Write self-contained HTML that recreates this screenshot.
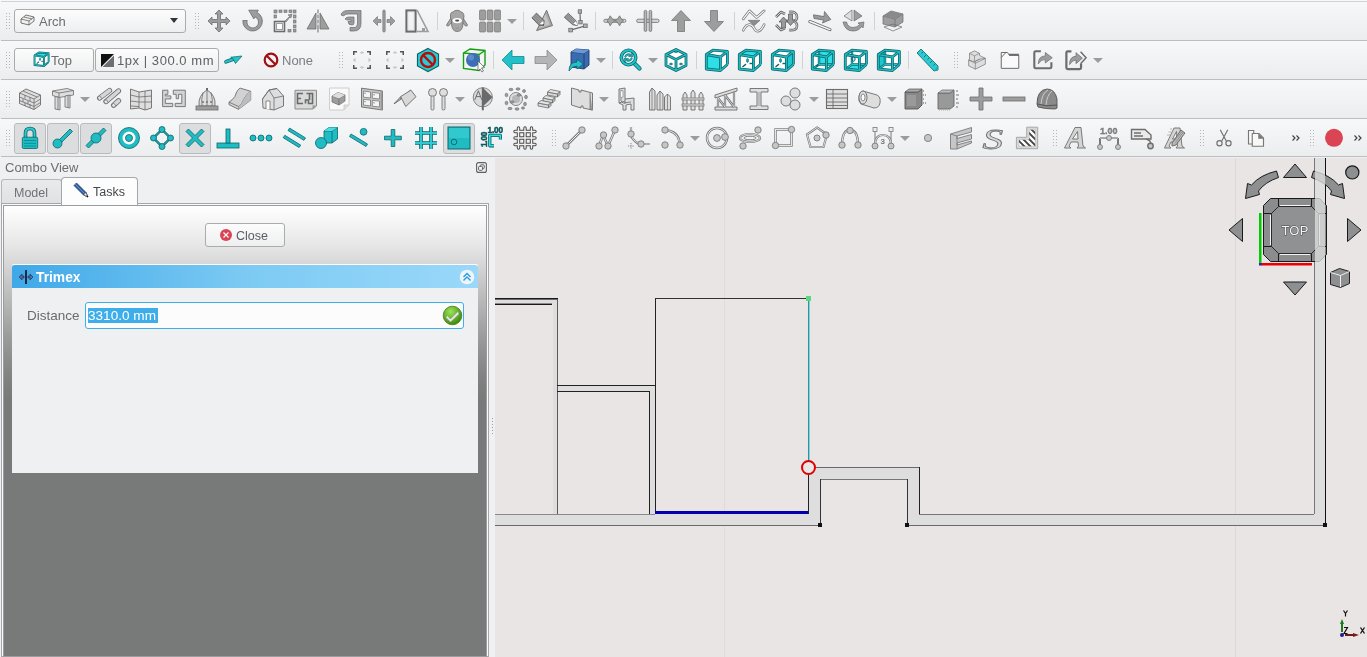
<!DOCTYPE html>
<html><head><meta charset="utf-8">
<style>
*{box-sizing:border-box}
html,body{margin:0;padding:0}
body{width:1367px;height:657px;overflow:hidden;position:relative;background:#eff0f1;font-family:"Liberation Sans",sans-serif;color:#31363b}
.a{position:absolute}
.row{position:absolute;left:0;width:1367px;background:linear-gradient(#f7f8f9,#ecedef)}
.hl{position:absolute;left:1px;width:1366px;height:1px;background:#bcbebf}
.handle{position:absolute;width:5px;height:17px;background-image:radial-gradient(circle,#b4b6b8 0.6px,transparent 0.9px);background-size:3px 3px}
.sep{position:absolute;width:1px;height:18px;background:#d0d2d3}
.ico{position:absolute;width:24px;height:24px;overflow:visible}
.dd{position:absolute;width:0;height:0;border-left:5px solid transparent;border-right:5px solid transparent;border-top:5px solid #9a9c9e}
.btn{position:absolute;border:1px solid #a9abac;border-radius:3px;background:linear-gradient(#fcfcfc,#eeeff0)}
.chk{position:absolute;width:32px;height:31px;border:1px solid #b9bbbc;border-radius:3px;background:#dcddde}
.t{position:absolute;white-space:nowrap;line-height:1;will-change:transform}
</style></head><body>
<!-- toolbar rows -->
<div class="row" style="top:0;height:40px"></div>
<div class="row" style="top:41px;height:38px"></div>
<div class="row" style="top:80px;height:38px"></div>
<div class="row" style="top:119px;height:37px"></div>
<div class="hl" style="top:1px;background:#d0d2d3"></div>
<div class="hl" style="top:40px"></div>
<div class="hl" style="top:79px"></div>
<div class="hl" style="top:118px"></div>
<div class="hl" style="top:156px"></div>

<div class="a" style="left:0;top:0;width:1367px;height:157px;will-change:transform"><div class="btn" style="left:14px;top:9px;width:172px;height:24px"></div>
<svg class="ico" style="left:20.0px;top:13px;width:24px;height:24px" viewBox="0 0 24 24"><path d="M1,6 L6,2 L14,4 L14,8 L9,12 L1,10 Z" fill="#f0f0f0" stroke="#555" stroke-width="0.8"/><path d="M1,6 L9,8 L14,4 M9,8 L9,12 M4,4 L12,6" fill="none" stroke="#555" stroke-width="0.7"/></svg>
<div class="t" style="left:39px;top:15px;font-size:13px;color:#6a6e72">Arch</div>
<div class="dd" style="left:170px;top:18px;border-top-color:#31363b;border-left-width:4px;border-right-width:4px;border-top-width:5px"></div>
<div class="handle" style="left:194px;top:12px"></div>
<svg class="ico" style="left:207.0px;top:9px;width:24px;height:24px" viewBox="0 0 24 24"><path d="M12,1 L16,5 L13.5,5 L13.5,10.5 L19,10.5 L19,8 L23,12 L19,16 L19,13.5 L13.5,13.5 L13.5,19 L16,19 L12,23 L8,19 L10.5,19 L10.5,13.5 L5,13.5 L5,16 L1,12 L5,8 L5,10.5 L10.5,10.5 L10.5,5 L8,5 Z" fill="#9d9d9d" stroke="#6c6c6c" stroke-width="0.8"/></svg>
<svg class="ico" style="left:240.5px;top:9px;width:24px;height:24px" viewBox="0 0 24 24"><path d="M1.8,11.5 A9.8,9.8 0 1 0 16.1,3.5 L17.3,1.2 L7.7,1.2 L12.8,9.9 L13.9,7.8 A5.8,5.8 0 1 1 6.2,11.5 Z" fill="#9d9d9d" stroke="#6c6c6c" stroke-width="0.8" stroke-linejoin="round"/></svg>
<svg class="ico" style="left:273.0px;top:9px;width:24px;height:24px" viewBox="0 0 24 24"><g fill="#9d9d9d" stroke="#6c6c6c" stroke-width="0.6"><rect x="1" y="1" width="3" height="3"/><rect x="6" y="1" width="3" height="2.5"/><rect x="11" y="1" width="3" height="2.5"/><rect x="16" y="1" width="3" height="2.5"/><rect x="20.5" y="1" width="2.5" height="3"/><rect x="20.5" y="6" width="2.5" height="3"/><rect x="20.5" y="11" width="2.5" height="3"/><rect x="20.5" y="16" width="2.5" height="3"/><rect x="20.5" y="20.5" width="2.5" height="2.5"/><rect x="15" y="20.5" width="3" height="2.5"/><rect x="1" y="6" width="2.5" height="3"/></g><rect x="1.5" y="12.5" width="10" height="10" fill="none" stroke="#6c6c6c" stroke-width="1.6"/><rect x="3.5" y="14.5" width="6" height="6" fill="#fff" stroke="#9d9d9d" stroke-width="1"/><path d="M12,12 L17,7 L15,6 L19,5 L18,9 L17,8 L13,13 Z" fill="#9d9d9d" stroke="#6c6c6c" stroke-width="0.6"/></svg>
<svg class="ico" style="left:306.0px;top:9px;width:24px;height:24px" viewBox="0 0 24 24"><path d="M10,4 L10,20 L1,20 Z M14,4 L14,20 L23,20 Z" fill="#9d9d9d" stroke="#6c6c6c" stroke-width="0.8"/><rect x="11.2" y="0.5" width="1.6" height="23" fill="#9d9d9d"/><g fill="#fff"><rect x="11.5" y="4" width="1" height="2"/><rect x="11.5" y="9" width="1" height="2"/><rect x="11.5" y="14" width="1" height="2"/></g></svg>
<svg class="ico" style="left:338.5px;top:9px;width:24px;height:24px" viewBox="0 0 24 24"><path d="M2,6 Q3,1.5 9,1.5 L22,1.5 L22,14 Q22,22 15,22 L11,22 L11,18.5 L15,18.5 Q18.5,18.5 18.5,14 L18.5,5 L9,5 Q5,5 5,7 Z" fill="#9d9d9d" stroke="#6c6c6c" stroke-width="0.7"/><path d="M6,10 Q7,8 10,8 L15,8 L15,14 Q15,16 13,16 Q9,16 9,12.5 L12,12.5 L12,11 L8,11 Z" fill="#9d9d9d" stroke="#6c6c6c" stroke-width="0.7"/></svg>
<svg class="ico" style="left:372.0px;top:9px;width:24px;height:24px" viewBox="0 0 24 24"><rect x="10.8" y="1" width="2.4" height="22" rx="1" fill="#9d9d9d" stroke="#6c6c6c" stroke-width="0.6"/><path d="M1,12 L5.5,7.5 L5.5,10.5 L9,10.5 L9,13.5 L5.5,13.5 L5.5,16.5 Z M23,12 L18.5,7.5 L18.5,10.5 L15,10.5 L15,13.5 L18.5,13.5 L18.5,16.5 Z" fill="#9d9d9d" stroke="#6c6c6c" stroke-width="0.6"/></svg>
<svg class="ico" style="left:405.0px;top:9px;width:24px;height:24px" viewBox="0 0 24 24"><rect x="1.5" y="1.5" width="9" height="21" fill="none" stroke="#6c6c6c" stroke-width="2.2"/><rect x="3" y="3" width="6" height="18" fill="none" stroke="#dedede" stroke-width="0.8"/><path d="M12,1 L23,22.5 L12,22.5" fill="none" stroke="#9d9d9d" stroke-width="1.6"/><rect x="17" y="19" width="3" height="3" fill="#9d9d9d"/></svg>
<div class="sep" style="left:437px;top:12px"></div>
<svg class="ico" style="left:445.0px;top:9px;width:24px;height:24px" viewBox="0 0 24 24"><path d="M6.5,8 L1.5,16 Q2,17.5 3.5,17 L7,13 Z M17.5,8 L22.5,16 Q22,17.5 20.5,17 L17,13 Z" fill="#a6a6a6" stroke="#6c6c6c" stroke-width="0.8" stroke-linejoin="round"/><path d="M5.5,8 Q5,3 8,3 Q10,1 12.2,1.3 Q14.5,1 16,3 Q19,3 19,8 Q18.5,10 18,11 L18,15 Q17.5,22.5 12.2,22.5 Q7,22.5 6.5,15 L6.5,11 Q5.5,10 5.5,8 Z" fill="#a6a6a6" stroke="#6c6c6c" stroke-width="0.8"/><ellipse cx="12.2" cy="11.6" rx="4.6" ry="2.6" fill="#fff"/><ellipse cx="12.2" cy="11.6" rx="2.2" ry="1.1" fill="#555"/><path d="M10.5,19 Q12.2,20 14,19" fill="none" stroke="#888" stroke-width="0.7"/></svg>
<svg class="ico" style="left:478.0px;top:9px;width:24px;height:24px" viewBox="0 0 24 24"><g fill="#9d9d9d" stroke="#6c6c6c" stroke-width="0.6"><rect x="1.5" y="1" width="6" height="10" rx="1"/><rect x="9" y="1" width="6" height="10" rx="1"/><rect x="16.5" y="1" width="6" height="10" rx="1"/><rect x="1.5" y="13" width="6" height="10" rx="1"/><rect x="9" y="13" width="6" height="10" rx="1"/><rect x="16.5" y="13" width="6" height="10" rx="1"/></g></svg>
<div class="dd" style="left:507.0px;top:19.0px"></div>
<div class="sep" style="left:523px;top:12px"></div>
<svg class="ico" style="left:530.0px;top:9px;width:24px;height:24px" viewBox="0 0 24 24"><path d="M16.6,1.2 L22.5,16.6 L6.6,21.6 Z" fill="#a8a8a8" stroke="#6c6c6c" stroke-width="0.9" stroke-linejoin="round"/><path d="M15.5,5 L19.5,15.5 L9,19 Z" fill="#c4c4c4"/><path d="M1.9,8.9 L6.4,4.1 L14.2,11.6 L13.6,16.4 L9.4,16.6 Z" fill="#8a8a8a" stroke="#5a5a5a" stroke-width="0.8" stroke-linejoin="round"/><path d="M3,7.8 L11,15.4 M4.2,6.5 L12.2,14 M5.4,5.3 L13.3,12.7" stroke="#bbb" stroke-width="0.5"/><path d="M10,14.5 L13.3,12 L13.6,16.4 Z" fill="#fff"/><path d="M12.5,15.6 L13.6,16.4 L13.3,15" fill="#333" stroke="#333" stroke-width="0.6"/></svg>
<svg class="ico" style="left:563.5px;top:9px;width:24px;height:24px" viewBox="0 0 24 24"><path d="M16,4 L16.4,12.7 M21.4,16.8 L6.5,21.1" stroke="#6c6c6c" stroke-width="1.2"/><path d="M0.3,8.2 L4.4,4.3 L12.5,12.3 L13.3,16.6 L8.8,15.8 Z" fill="#8a8a8a" stroke="#5a5a5a" stroke-width="0.8" stroke-linejoin="round"/><path d="M1.4,7.1 L9.6,15 M2.6,5.9 L10.8,13.8 M3.8,4.8 L11.9,12.6" stroke="#bbb" stroke-width="0.5"/><path d="M9.4,14.6 L12.3,12.3 L13.3,16.6 Z" fill="#fff"/><g fill="#b0b0b0" stroke="#6c6c6c" stroke-width="0.8"><rect x="14.2" y="0.8" width="3.4" height="3.4"/><rect x="14.8" y="11.5" width="3.4" height="3.4"/><rect x="19.6" y="15" width="3.6" height="3.6"/><rect x="4.8" y="19.3" width="3.6" height="3.6"/></g></svg>
<div class="sep" style="left:595px;top:12px"></div>
<svg class="ico" style="left:603.0px;top:9px;width:24px;height:24px" viewBox="0 0 24 24"><rect x="0.9" y="10.3" width="21.9" height="3" rx="1.2" fill="#d8d8d8" stroke="#6c6c6c" stroke-width="0.8"/><path d="M3.8,11.8 Q6,10.5 7.2,6.8 Q9,10.5 12,11.8 Q9,13 7.2,16.8 Q6,13 3.8,11.8 Z M12,11.8 Q15,10.5 16.6,6.8 Q18,10.5 20.5,11.8 Q18,13 16.6,16.8 Q15,13 12,11.8 Z" fill="#a6a6a6" stroke="#6c6c6c" stroke-width="0.8" stroke-linejoin="round"/></svg>
<svg class="ico" style="left:636.0px;top:9px;width:24px;height:24px" viewBox="0 0 24 24"><rect x="0.7" y="10.2" width="22.3" height="3.2" rx="1.4" fill="#d8d8d8" stroke="#6c6c6c" stroke-width="0.8"/><rect x="8.2" y="1.4" width="2.6" height="21" rx="1.2" fill="#b8b8b8" stroke="#6c6c6c" stroke-width="0.8"/><rect x="13.1" y="1.4" width="2.6" height="21" rx="1.2" fill="#b8b8b8" stroke="#6c6c6c" stroke-width="0.8"/></svg>
<svg class="ico" style="left:669.0px;top:9px;width:24px;height:24px" viewBox="0 0 24 24"><path d="M12,1.5 L21.5,11.5 L15.5,11.5 L15.5,22.5 L8.5,22.5 L8.5,11.5 L2.5,11.5 Z" fill="#9d9d9d" stroke="#6c6c6c" stroke-width="0.7"/></svg>
<svg class="ico" style="left:702.0px;top:9px;width:24px;height:24px" viewBox="0 0 24 24"><path d="M12,22.5 L21.5,12.5 L15.5,12.5 L15.5,1.5 L8.5,1.5 L8.5,12.5 L2.5,12.5 Z" fill="#9d9d9d" stroke="#6c6c6c" stroke-width="0.7"/></svg>
<div class="sep" style="left:734px;top:12px"></div>
<svg class="ico" style="left:742.0px;top:9px;width:24px;height:24px" viewBox="0 0 24 24"><path d="M1.3,9.9 L7.5,1.8 L14.6,8.5 L22.2,1.8 M1.3,21.3 Q4,15.6 7.5,15.6 Q10,15.6 12,19 Q13.5,22.2 15.5,22.2 Q19,22.2 22.2,15.6" fill="none" stroke="#7a7a7a" stroke-width="2.6" stroke-linecap="round" stroke-linejoin="round"/><path d="M1.3,9.9 L7.5,1.8 L14.6,8.5 L22.2,1.8 M1.3,21.3 Q4,15.6 7.5,15.6 Q10,15.6 12,19 Q13.5,22.2 15.5,22.2 Q19,22.2 22.2,15.6" fill="none" stroke="#fafafa" stroke-width="1.1" stroke-linecap="round" stroke-linejoin="round"/><path d="M6.1,11.3 L18,11.3 L12.3,16.5 Z" fill="#8c8c8c" stroke="#6c6c6c" stroke-width="0.6"/></svg>
<svg class="ico" style="left:775.0px;top:9px;width:24px;height:24px" viewBox="0 0 24 24"><path d="M1,8 L6,3 L10,5 M1,16 L6,21 L10,19 M14,3 Q22,2 22,8 Q22,12 18,12 Q22,13 22,17 Q22,22 14,21" fill="none" stroke="#6c6c6c" stroke-width="2.6" stroke-linejoin="round"/><path d="M1,8 L6,3 L10,5 M1,16 L6,21 L10,19 M14,3 Q22,2 22,8 Q22,12 18,12 Q22,13 22,17 Q22,22 14,21" fill="none" stroke="#cfcfcf" stroke-width="1" stroke-linejoin="round"/><path d="M4,13 L8.5,8 L13,13 L10.5,13 L10.5,19 L6.5,19 L6.5,13 Z M11,11 L13.5,11 L13.5,5 L17.5,5 L17.5,11 L20,11 L15.5,16.5 Z" fill="#9a9a9a" stroke="#5f5f5f" stroke-width="0.8"/></svg>
<svg class="ico" style="left:808.0px;top:9px;width:24px;height:24px" viewBox="0 0 24 24"><path d="M1.8,12.5 L22,20.6" stroke="#6c6c6c" stroke-width="3" stroke-linecap="round"/><path d="M1.8,12.5 L22,20.6" stroke="#fafafa" stroke-width="1.4" stroke-linecap="round"/><path d="M5.5,5.8 L16,7.6 L16.5,2.5 L22.8,10.5 L14.5,14 L15.5,11 L6,9.5 Z" fill="#9a9a9a" stroke="#6c6c6c" stroke-width="0.8" stroke-linejoin="round"/></svg>
<svg class="ico" style="left:841.0px;top:9px;width:24px;height:24px" viewBox="0 0 24 24"><path d="M11,1 L11,12 L3,7 Z" fill="#dedede" stroke="#6c6c6c" stroke-width="0.7"/><path d="M13,1 L13,12 L21,7 Z" fill="#9d9d9d" stroke="#6c6c6c" stroke-width="0.7"/><path d="M2,13 Q4,22 12,22 Q18,22 21,17 L22,19 L23,13 L17,14 L19,15.5 Q16,18.5 12,18.5 Q7,18.5 5.5,13 Z" fill="#9d9d9d" stroke="#6c6c6c" stroke-width="0.7"/></svg>
<div class="sep" style="left:874px;top:12px"></div>
<svg class="ico" style="left:881.0px;top:9px;width:24px;height:24px" viewBox="0 0 24 24"><path d="M2,7 L10,2 L22,5 L22,13 L14,18 L2,15 Z" fill="#9d9d9d" stroke="#6c6c6c" stroke-width="0.7"/><path d="M2,7 L14,10 L22,5 M14,10 L14,18" fill="none" stroke="#6c6c6c" stroke-width="0.7"/><path d="M2,7 L10,2 L22,5 L14,10 Z" fill="#8a8a8a"/><path d="M3,18 L12,15 L21,18 L12,22 Z" fill="none" stroke="#6c6c6c" stroke-width="0.7"/></svg>
<div class="handle" style="left:5px;top:51px"></div>
<div class="btn" style="left:14px;top:48px;width:80px;height:24px"></div>
<svg class="ico" style="left:33.0px;top:51px;width:16px;height:16px" viewBox="0 0 24 24"><polygon points="2.3,6.5 9,2.2 23.4,3.3 23.4,16.5 16.4,22.5 2.3,21" fill="#fff"/><polygon points="2.3,6.5 9,2.2 23.4,3.3 16.4,9" fill="#2ee0e6"/><path d="M2.3,6.5 L16.4,9 L16.4,22.5 L2.3,21 Z M2.3,6.5 L9,2.2 L23.4,3.3 L16.4,9 M23.4,3.3 L23.4,16.5 M23.4,16.5 L16.4,22.5" fill="none" stroke="#0b6569" stroke-width="2.8" stroke-linejoin="round"/><path d="M2.3,6.5 L16.4,9 L16.4,22.5 L2.3,21 Z M2.3,6.5 L9,2.2 L23.4,3.3 L16.4,9 M23.4,3.3 L23.4,16.5 M23.4,16.5 L16.4,22.5" fill="none" stroke="#1fbcc4" stroke-width="1.3" stroke-linejoin="round"/><ellipse cx="10.5" cy="12.5" rx="1" ry="2" fill="#17aab2" stroke="#0b6569" stroke-width="0.6"/><path d="M12.5,15.5 L15.5,15.5" stroke="#0b6569" stroke-width="1.4"/><path d="M6,18.5 L8.5,16.5" stroke="#0b6569" stroke-width="1.6" stroke-linecap="round"/></svg>
<div class="t" style="left:51px;top:54px;font-size:13px;color:#6a6e72">Top</div>
<div class="btn" style="left:95px;top:48px;width:124px;height:24px"></div>
<svg class="a" style="left:101px;top:54px" width="13" height="13" viewBox="0 0 13 13"><path d="M0,0 L13,0 L0,13 Z" fill="#111"/><path d="M13,1.5 L13,13 L1.5,13 Z" fill="#6c7075"/></svg>
<div class="t" style="left:117px;top:54px;font-size:13px;color:#5d6165;letter-spacing:0.55px">1px | 300.0 mm</div>
<svg class="ico" style="left:222.0px;top:48px;width:24px;height:24px" viewBox="0 0 24 24"><path d="M4,13.8 L11.8,11" stroke="#0b6569" stroke-width="3.6" stroke-linecap="round"/><path d="M4,13.8 L11.8,11" stroke="#22c4cb" stroke-width="2.2" stroke-linecap="round"/><path d="M8.8,9.2 L20,8 L13.5,15.5 L11.5,11.5 Z" fill="#22c4cb" stroke="#0b6569" stroke-width="0.7" stroke-linejoin="round"/></svg>
<svg class="a" style="left:263px;top:52px" width="16" height="16" viewBox="0 0 16 16"><circle cx="8" cy="8" r="6.3" fill="none" stroke="#a01010" stroke-width="2.2"/><path d="M3.5,3.5 L12.5,12.5" stroke="#a01010" stroke-width="2.2"/></svg>
<div class="t" style="left:282px;top:54px;font-size:13px;color:#7a7e82">None</div>
<div class="handle" style="left:338px;top:51px"></div>
<svg class="ico" style="left:350.0px;top:48px;width:24px;height:24px" viewBox="0 0 24 24"><g fill="#555"><path d="M3,3 L7,3 L7,4.5 L4.5,4.5 L4.5,7 L3,7 Z"/><path d="M21,3 L17,3 L17,4.5 L19.5,4.5 L19.5,7 L21,7 Z"/><path d="M3,21 L7,21 L7,19.5 L4.5,19.5 L4.5,17 L3,17 Z"/><path d="M21,21 L17,21 L17,19.5 L19.5,19.5 L19.5,17 L21,17 Z"/></g><g fill="none" stroke="#aaa" stroke-width="0.7"><path d="M10.5,5 L12,3.5 L13.5,5 Z M10.5,19 L12,20.5 L13.5,19 Z M5,10.5 L3.5,12 L5,13.5 Z M19,10.5 L20.5,12 L19,13.5 Z"/></g></svg>
<svg class="ico" style="left:383.0px;top:48px;width:24px;height:24px" viewBox="0 0 24 24"><g fill="#555"><path d="M3,3 L7,3 L7,4.5 L4.5,4.5 L4.5,7 L3,7 Z"/><path d="M21,3 L17,3 L17,4.5 L19.5,4.5 L19.5,7 L21,7 Z"/><path d="M3,21 L7,21 L7,19.5 L4.5,19.5 L4.5,17 L3,17 Z"/><path d="M21,21 L17,21 L17,19.5 L19.5,19.5 L19.5,17 L21,17 Z"/></g><g fill="none" stroke="#aaa" stroke-width="0.7"><path d="M10.5,5 L12,3.5 L13.5,5 Z M10.5,19 L12,20.5 L13.5,19 Z M5,10.5 L3.5,12 L5,13.5 Z M19,10.5 L20.5,12 L19,13.5 Z"/></g></svg>
<svg class="ico" style="left:416.0px;top:48px;width:24px;height:24px" viewBox="0 0 24 24"><path d="M12,0.5 L22.5,6 L22.5,18 L12,23.5 L1.5,18 L1.5,6 Z" fill="#2cc9d0" stroke="#0b6569" stroke-width="1.2"/><circle cx="12" cy="12" r="7" fill="none" stroke="#b01010" stroke-width="2.4"/><path d="M7,7 L17,17" stroke="#b01010" stroke-width="2.4"/></svg>
<div class="dd" style="left:445.0px;top:58.0px"></div>
<svg class="ico" style="left:461.5px;top:48px;width:24px;height:24px" viewBox="0 0 24 24"><path d="M1.5,5 L8,1 L23,2.5 L23,17 L17,22.5 L1.5,20.5 Z" fill="#f4f4f4" stroke="#13a013" stroke-width="1.4"/><path d="M1.5,5 L17,6.5 L23,2.5 M17,6.5 L17,22.5" fill="none" stroke="#13a013" stroke-width="1.4"/><circle cx="11" cy="12" r="7" fill="#3d6fb6"/><circle cx="9" cy="9.5" r="3" fill="#6d97d4" opacity="0.7"/><path d="M16,13 L16,23 L18,21 L20,24 L21.5,23 L19.5,20 L22.5,19.5 Z" fill="#fff" stroke="#555" stroke-width="0.7"/></svg>
<div class="sep" style="left:493px;top:51px"></div>
<svg class="ico" style="left:501.0px;top:48px;width:24px;height:24px" viewBox="0 0 24 24"><path d="M1,12 L11,2 L11,8.5 L23,8.5 L23,15.5 L11,15.5 L11,22 Z" fill="#22c0c8" stroke="#0d8a90" stroke-width="0.8"/></svg>
<svg class="ico" style="left:534.0px;top:48px;width:24px;height:24px" viewBox="0 0 24 24"><path d="M23,12 L13,2 L13,8.5 L1,8.5 L1,15.5 L13,15.5 L13,22 Z" fill="#b5b5b5" stroke="#8a8a8a" stroke-width="0.8"/></svg>
<svg class="ico" style="left:567.0px;top:48px;width:24px;height:24px" viewBox="0 0 24 24"><path d="M4,4 L9,1 L22,2 L22,17 L17,21 L4,19 Z" fill="#3a6ab0" stroke="#1d3e73" stroke-width="0.9"/><path d="M4,4 L17,5.5 L22,2 M17,5.5 L17,21" fill="none" stroke="#1d3e73" stroke-width="0.9"/><path d="M4,4 L9,1 L22,2 L17,5.5 Z" fill="#6a98d8"/><path d="M2,23 Q2,14 10,14 L10,11 L16,16 L10,21 L10,18 Q5,18 2,23 Z" fill="#22c0c8" stroke="#0b6569" stroke-width="0.8"/></svg>
<div class="dd" style="left:596.0px;top:58.0px"></div>
<div class="sep" style="left:612px;top:51px"></div>
<svg class="ico" style="left:619.0px;top:48px;width:24px;height:24px" viewBox="0 0 24 24"><path d="M14.5,14.5 L20.5,20.5" stroke="#0b6569" stroke-width="4.2" stroke-linecap="round"/><path d="M14.5,14.5 L20.5,20.5" stroke="#22c4cb" stroke-width="2.6" stroke-linecap="round"/><circle cx="9.5" cy="9.5" r="7.2" fill="#fff" stroke="#0b6569" stroke-width="3.6"/><circle cx="9.5" cy="9.5" r="7.2" fill="none" stroke="#22c4cb" stroke-width="2"/><path d="M5.5,8.5 Q6.5,5.5 10,5.5 L12.5,6.5 L13,4.5 L14,9 L9.5,8.5 L11.5,7.5 Q8,6.5 6.5,9.5 Z M13.5,10.5 Q12.5,13.5 9,13.5 L6.5,12.5 L6,14.5 L5,10 L9.5,10.5 L7.5,11.5 Q11,12.5 12.5,9.5 Z" fill="#17aab2" stroke="#0b6569" stroke-width="0.5"/></svg>
<div class="dd" style="left:648.0px;top:58.0px"></div>
<svg class="ico" style="left:664.0px;top:48px;width:24px;height:24px" viewBox="0 0 24 24"><path d="M12,1.5 L22,6.5 L22,17.5 L12,22.5 L2,17.5 L2,6.5 Z" fill="#fff"/><path d="M12,1.5 L22,6.5 L22,17.5 L12,22.5 L2,17.5 L2,6.5 Z M2,6.5 L12,11.5 L22,6.5 M12,11.5 L12,22.5 M12,1.5 L12,5" fill="none" stroke="#0b6569" stroke-width="2.8" stroke-linejoin="round"/><path d="M12,1.5 L22,6.5 L22,17.5 L12,22.5 L2,17.5 L2,6.5 Z M2,6.5 L12,11.5 L22,6.5 M12,11.5 L12,22.5 M12,1.5 L12,5" fill="none" stroke="#22c4cb" stroke-width="1.2" stroke-linejoin="round"/><ellipse cx="7" cy="16" rx="1.5" ry="0.9" fill="#17aab2" stroke="#0b6569" stroke-width="0.6"/><ellipse cx="17" cy="16" rx="1.5" ry="0.9" fill="#17aab2" stroke="#0b6569" stroke-width="0.6"/></svg>
<div class="sep" style="left:696px;top:51px"></div>
<svg class="ico" style="left:704.0px;top:48px;width:24px;height:24px" viewBox="0 0 24 24"><polygon points="2.3,6.5 9,2.2 23.4,3.3 23.4,16.5 16.4,22.5 2.3,21" fill="#fff"/><polygon points="2.3,6.5 16.4,9 16.4,22.5 2.3,21" fill="#2ee0e6"/><path d="M2.3,6.5 L16.4,9 L16.4,22.5 L2.3,21 Z M2.3,6.5 L9,2.2 L23.4,3.3 L16.4,9 M23.4,3.3 L23.4,16.5 M23.4,16.5 L16.4,22.5" fill="none" stroke="#0b6569" stroke-width="2.8" stroke-linejoin="round"/><path d="M2.3,6.5 L16.4,9 L16.4,22.5 L2.3,21 Z M2.3,6.5 L9,2.2 L23.4,3.3 L16.4,9 M23.4,3.3 L23.4,16.5 M23.4,16.5 L16.4,22.5" fill="none" stroke="#1fbcc4" stroke-width="1.3" stroke-linejoin="round"/></svg>
<svg class="ico" style="left:737.0px;top:48px;width:24px;height:24px" viewBox="0 0 24 24"><polygon points="2.3,6.5 9,2.2 23.4,3.3 23.4,16.5 16.4,22.5 2.3,21" fill="#fff"/><polygon points="2.3,6.5 9,2.2 23.4,3.3 16.4,9" fill="#2ee0e6"/><path d="M2.3,6.5 L16.4,9 L16.4,22.5 L2.3,21 Z M2.3,6.5 L9,2.2 L23.4,3.3 L16.4,9 M23.4,3.3 L23.4,16.5 M23.4,16.5 L16.4,22.5" fill="none" stroke="#0b6569" stroke-width="2.8" stroke-linejoin="round"/><path d="M2.3,6.5 L16.4,9 L16.4,22.5 L2.3,21 Z M2.3,6.5 L9,2.2 L23.4,3.3 L16.4,9 M23.4,3.3 L23.4,16.5 M23.4,16.5 L16.4,22.5" fill="none" stroke="#1fbcc4" stroke-width="1.3" stroke-linejoin="round"/><ellipse cx="10.5" cy="12.5" rx="1" ry="2" fill="#17aab2" stroke="#0b6569" stroke-width="0.6"/><path d="M12.5,15.5 L15.5,15.5" stroke="#0b6569" stroke-width="1.4"/><path d="M6,18.5 L8.5,16.5" stroke="#0b6569" stroke-width="1.6" stroke-linecap="round"/></svg>
<svg class="ico" style="left:770.0px;top:48px;width:24px;height:24px" viewBox="0 0 24 24"><polygon points="2.3,6.5 9,2.2 23.4,3.3 23.4,16.5 16.4,22.5 2.3,21" fill="#fff"/><polygon points="16.4,9 23.4,3.3 23.4,16.5 16.4,22.5" fill="#1fc6cd"/><path d="M2.3,6.5 L16.4,9 L16.4,22.5 L2.3,21 Z M2.3,6.5 L9,2.2 L23.4,3.3 L16.4,9 M23.4,3.3 L23.4,16.5 M23.4,16.5 L16.4,22.5" fill="none" stroke="#0b6569" stroke-width="2.8" stroke-linejoin="round"/><path d="M2.3,6.5 L16.4,9 L16.4,22.5 L2.3,21 Z M2.3,6.5 L9,2.2 L23.4,3.3 L16.4,9 M23.4,3.3 L23.4,16.5 M23.4,16.5 L16.4,22.5" fill="none" stroke="#1fbcc4" stroke-width="1.3" stroke-linejoin="round"/><ellipse cx="10.5" cy="12.5" rx="1" ry="2" fill="#17aab2" stroke="#0b6569" stroke-width="0.6"/><path d="M12.5,15.5 L15.5,15.5" stroke="#0b6569" stroke-width="1.4"/><path d="M6,18.5 L8.5,16.5" stroke="#0b6569" stroke-width="1.6" stroke-linecap="round"/></svg>
<div class="sep" style="left:802px;top:51px"></div>
<svg class="ico" style="left:810.0px;top:48px;width:24px;height:24px" viewBox="0 0 24 24"><polygon points="2.3,6.5 9,2.2 23.4,3.3 23.4,16.5 16.4,22.5 2.3,21" fill="#fff"/><polygon points="9,2.2 23.4,3.3 23.4,16.5 9,16.5" fill="#2ee0e6"/><path d="M9,2.2 L9,16.5 L23.4,16.5 M9,16.5 L2.3,21" fill="none" stroke="#0b6569" stroke-width="2.4"/><path d="M9,2.2 L9,16.5 L23.4,16.5 M9,16.5 L2.3,21" fill="none" stroke="#22c4cb" stroke-width="1.1"/><path d="M2.3,6.5 L16.4,9 L16.4,22.5 L2.3,21 Z M2.3,6.5 L9,2.2 L23.4,3.3 L16.4,9 M23.4,3.3 L23.4,16.5 M23.4,16.5 L16.4,22.5" fill="none" stroke="#0b6569" stroke-width="2.8" stroke-linejoin="round"/><path d="M2.3,6.5 L16.4,9 L16.4,22.5 L2.3,21 Z M2.3,6.5 L9,2.2 L23.4,3.3 L16.4,9 M23.4,3.3 L23.4,16.5 M23.4,16.5 L16.4,22.5" fill="none" stroke="#1fbcc4" stroke-width="1.3" stroke-linejoin="round"/><path d="M6,18.5 L8.5,16.5" stroke="#0b6569" stroke-width="1.6"/></svg>
<svg class="ico" style="left:843.0px;top:48px;width:24px;height:24px" viewBox="0 0 24 24"><polygon points="2.3,6.5 9,2.2 23.4,3.3 23.4,16.5 16.4,22.5 2.3,21" fill="#fff"/><polygon points="2.3,21 9,16.5 23.4,16.5 16.4,22.5" fill="#2ee0e6"/><path d="M9,2.2 L9,16.5 L23.4,16.5 M9,16.5 L2.3,21" fill="none" stroke="#0b6569" stroke-width="2.4"/><path d="M9,2.2 L9,16.5 L23.4,16.5 M9,16.5 L2.3,21" fill="none" stroke="#22c4cb" stroke-width="1.1"/><path d="M2.3,6.5 L16.4,9 L16.4,22.5 L2.3,21 Z M2.3,6.5 L9,2.2 L23.4,3.3 L16.4,9 M23.4,3.3 L23.4,16.5 M23.4,16.5 L16.4,22.5" fill="none" stroke="#0b6569" stroke-width="2.8" stroke-linejoin="round"/><path d="M2.3,6.5 L16.4,9 L16.4,22.5 L2.3,21 Z M2.3,6.5 L9,2.2 L23.4,3.3 L16.4,9 M23.4,3.3 L23.4,16.5 M23.4,16.5 L16.4,22.5" fill="none" stroke="#1fbcc4" stroke-width="1.3" stroke-linejoin="round"/><ellipse cx="10.5" cy="11" rx="1.6" ry="2.2" fill="none" stroke="#0b6569" stroke-width="1"/></svg>
<svg class="ico" style="left:876.0px;top:48px;width:24px;height:24px" viewBox="0 0 24 24"><polygon points="2.3,6.5 9,2.2 23.4,3.3 23.4,16.5 16.4,22.5 2.3,21" fill="#fff"/><polygon points="2.3,6.5 9,2.2 9,16.5 2.3,21" fill="#1fc6cd"/><path d="M9,2.2 L9,16.5 L23.4,16.5 M9,16.5 L2.3,21" fill="none" stroke="#0b6569" stroke-width="2.4"/><path d="M9,2.2 L9,16.5 L23.4,16.5 M9,16.5 L2.3,21" fill="none" stroke="#22c4cb" stroke-width="1.1"/><path d="M2.3,6.5 L16.4,9 L16.4,22.5 L2.3,21 Z M2.3,6.5 L9,2.2 L23.4,3.3 L16.4,9 M23.4,3.3 L23.4,16.5 M23.4,16.5 L16.4,22.5" fill="none" stroke="#0b6569" stroke-width="2.8" stroke-linejoin="round"/><path d="M2.3,6.5 L16.4,9 L16.4,22.5 L2.3,21 Z M2.3,6.5 L9,2.2 L23.4,3.3 L16.4,9 M23.4,3.3 L23.4,16.5 M23.4,16.5 L16.4,22.5" fill="none" stroke="#1fbcc4" stroke-width="1.3" stroke-linejoin="round"/></svg>
<div class="sep" style="left:908px;top:51px"></div>
<svg class="ico" style="left:914.5px;top:48px;width:24px;height:24px" viewBox="0 0 24 24"><path d="M2,5 L6,1 L23,18 L23,22 L19,23 Z" fill="#2cc9d0" stroke="#0b6569" stroke-width="0.8"/><path d="M8,4 L6.5,5.5 M11,7 L9,9 M14,10 L12.5,11.5 M17,13 L15,15 M20,16 L18.5,17.5" stroke="#0b6569" stroke-width="0.8"/><path d="M19,23 L23,18 L23,22 Z" fill="#17aab2"/></svg>
<div class="handle" style="left:953px;top:51px"></div>
<svg class="ico" style="left:967.0px;top:50px;width:20px;height:20px" viewBox="0 0 24 24"><path d="M2,12 L2,19 L10,23 L22,17 L22,10 L15,6.5 L15,4 L9,1 L3,4 L3,11 Z" fill="#dedede" stroke="#6c6c6c" stroke-width="0.8"/><path d="M3,4 L9,7 L15,4 M9,7 L9,14 L2,12 M9,14 L15,11 L22,10 M15,11 L10,13.5 L10,23 M2,12 L10,16 L22,10" fill="none" stroke="#6c6c6c" stroke-width="0.7"/></svg>
<svg class="ico" style="left:999.7px;top:50px;width:20px;height:20px" viewBox="0 0 24 24"><path d="M1.5,3 L9,3 L11,6 L22.5,6 L22.5,22 L1.5,22 Z" fill="#fafafa" stroke="#6c6c6c" stroke-width="1.2"/><path d="M1.5,9 L7,3 M11,6 L22.5,6" fill="none" stroke="#6c6c6c" stroke-width="1.2"/><rect x="11" y="4.5" width="11.5" height="2.5" fill="#6c6c6c"/></svg>
<svg class="ico" style="left:1032.5px;top:49px;width:21px;height:21px" viewBox="0 0 24 24"><path d="M9,2.5 L3,2.5 Q1.5,2.5 1.5,4 L1.5,20.5 Q1.5,22 3,22 L19.5,22 Q21,22 21,20.5 L21,15" fill="none" stroke="#6c6c6c" stroke-width="2.4"/><path d="M6,17 Q6,8 14,8 L14,4 L22,10 L14,16 L14,12 Q9,12 6,17 Z" fill="#9d9d9d" stroke="#6c6c6c" stroke-width="0.8"/></svg>
<svg class="ico" style="left:1065.0px;top:49px;width:22px;height:22px" viewBox="0 0 24 24"><path d="M7,2.5 L3,2.5 Q1.5,2.5 1.5,4 L1.5,20.5 Q1.5,22 3,22 L16,22 Q17.5,22 17.5,20.5 L17.5,16" fill="none" stroke="#6c6c6c" stroke-width="2.4"/><path d="M5,17 Q5,8 12,8 L12,4 L19,10 L12,16 L12,12 Q8,12 5,17 Z" fill="#9d9d9d" stroke="#6c6c6c" stroke-width="0.8"/><path d="M17,3 L23,9.5 L17,16" fill="none" stroke="#6c6c6c" stroke-width="1.6"/></svg>
<div class="dd" style="left:1093.0px;top:58.0px"></div>
<div class="handle" style="left:5px;top:90px"></div>
<svg class="ico" style="left:18.0px;top:87px;width:24px;height:24px" viewBox="0 0 24 24"><path d="M1.5,6 L8,2 L22.5,8 L22.5,18 L16,22.5 L1.5,16.5 Z" fill="#dedede" stroke="#6c6c6c" stroke-width="0.9" stroke-linejoin="round"/><path d="M1.5,6 L16,12 L22.5,8 M16,12 L16,22.5 M1.5,10 L16,16 L22.5,12 M1.5,13.5 L16,19.5 L22.5,15.5 M5,4 L19,10 M7,8 L7,11.5 M12,10 L12,14 M5,12 L5,15 M10,14 L10,17.5 M7,15.5 L7,19 M12,17 L12,21" fill="none" stroke="#6c6c6c" stroke-width="0.8"/></svg>
<svg class="ico" style="left:51.0px;top:87px;width:24px;height:24px" viewBox="0 0 24 24"><path d="M1.5,4 L16,1.5 L22.5,3.5 L22.5,8 L8,10.5 L1.5,8.5 Z" fill="#dedede" stroke="#6c6c6c" stroke-width="0.8"/><path d="M1.5,4 L8,6 L22.5,3.5 M8,6 L8,10.5" fill="none" stroke="#6c6c6c" stroke-width="0.8"/><path d="M4,9.5 L4,22 L9,23 L9,10.5 Z M14,9 L14,20 L19,21 L19,8 Z" fill="#dedede" stroke="#6c6c6c" stroke-width="0.8"/><path d="M7,10 L7,22.5 M17,8.5 L17,20.5" stroke="#6c6c6c" stroke-width="0.8"/></svg>
<div class="dd" style="left:80.0px;top:97.0px"></div>
<svg class="ico" style="left:96.0px;top:87px;width:24px;height:24px" viewBox="0 0 24 24"><path d="M3.6,11 L13.6,3.5 M10,14.6 L22.5,4 M17.6,18.2 L22.5,13.8" fill="none" stroke="#6c6c6c" stroke-width="5.2" stroke-linecap="round"/><path d="M3.6,11 L13.6,3.5 M10,14.6 L22.5,4 M17.6,18.2 L22.5,13.8" fill="none" stroke="#d6d6d6" stroke-width="3.6" stroke-linecap="round"/><g fill="#e8e8e8" stroke="#6c6c6c" stroke-width="0.7"><ellipse cx="3.6" cy="11.2" rx="1.7" ry="2" transform="rotate(-37 3.6 11.2)"/><ellipse cx="10" cy="14.8" rx="1.7" ry="2" transform="rotate(-40 10 14.8)"/><ellipse cx="17.6" cy="18.4" rx="1.7" ry="2" transform="rotate(-42 17.6 18.4)"/></g></svg>
<svg class="ico" style="left:129.0px;top:87px;width:24px;height:24px" viewBox="0 0 24 24"><path d="M1.5,2 L10,5 L22.5,3 L22.5,21 L16,23 L10,21 L1.5,22 Z" fill="#dedede" stroke="#6c6c6c" stroke-width="0.9"/><path d="M10,5 L10,21 M16,4 L16,23 M1.5,8 L10,10 L22.5,9 M1.5,14 L10,15 L22.5,15 M1.5,19 L10,19.5" fill="none" stroke="#6c6c6c" stroke-width="0.8"/></svg>
<svg class="ico" style="left:162.0px;top:87px;width:24px;height:24px" viewBox="0 0 24 24"><path d="M0.6,3.2 L5.9,3.2 L5.9,7.3 L3.3,7.3 L3.3,8.9 L8.9,8.9 L8.9,11.9 L3.3,11.9 L3.3,16.4 L10.7,16.4 L10.7,19.6 L0.6,19.6 Z M11.3,3.2 L23.3,3.2 L23.3,19.6 L13.2,19.6 L13.2,16.4 L19.8,16.4 L19.8,7.3 L16.6,7.3 L16.6,11.7 L14.2,11.7 L14.2,7.3 L11.3,7.3 Z" fill="#d4d4d4" stroke="#6e6e6e" stroke-width="0.9" stroke-linejoin="round"/></svg>
<svg class="ico" style="left:195.0px;top:87px;width:24px;height:24px" viewBox="0 0 24 24"><path d="M4,19 Q3,8 12,3 Q21,8 20,19 Z" fill="#dedede" stroke="#6c6c6c" stroke-width="0.9"/><path d="M12,3 L12,19 M8,5.5 Q6,12 7,19 M16,5.5 Q18,12 17,19" fill="none" stroke="#6c6c6c" stroke-width="0.8"/><rect x="1" y="19" width="22" height="4" fill="#9d9d9d" stroke="#6c6c6c" stroke-width="0.8"/><circle cx="8" cy="15" r="0.9" fill="#6c6c6c"/><circle cx="12" cy="15" r="0.9" fill="#6c6c6c"/><circle cx="16" cy="15" r="0.9" fill="#6c6c6c"/><rect x="11" y="1" width="2" height="2" fill="#6c6c6c"/></svg>
<svg class="ico" style="left:228.0px;top:87px;width:24px;height:24px" viewBox="0 0 24 24"><path d="M1,15.2 Q5,12.5 6.9,9.5 Q9.5,1.5 12.5,1.2 L22.7,4.3 L22.7,13.2 L10.5,22.3 L1,17.6 Z" fill="#d2d2d2" stroke="#6c6c6c" stroke-width="0.9" stroke-linejoin="round"/><path d="M1,15.2 L10.9,19.6 Q14,17 16.5,11 Q19,6 22.7,4.3 M10.9,19.6 L10.5,22.3" fill="none" stroke="#6c6c6c" stroke-width="0.8"/><path d="M10.9,19.6 Q14,17 16.5,11 Q19,6 22.7,4.3 L22.7,13.2 L10.5,22.3 Z" fill="#bdbdbd"/></svg>
<svg class="ico" style="left:261.0px;top:87px;width:24px;height:24px" viewBox="0 0 24 24"><path d="M1.5,12 L8,3 L16,1.5 L22.5,9 L22.5,19 L13,23 L2,21 Z" fill="#dedede" stroke="#6c6c6c" stroke-width="0.9" stroke-linejoin="round"/><path d="M1.5,12 L8,3 L13,11 L13,23 M13,11 L22.5,9 M8,3 L16,1.5" fill="none" stroke="#6c6c6c" stroke-width="0.8"/><path d="M5,22 L5,14 L9,14 L9,22.5" fill="#fff" stroke="#6c6c6c" stroke-width="0.8"/></svg>
<svg class="ico" style="left:294.0px;top:87px;width:24px;height:24px" viewBox="0 0 24 24"><path d="M1,3.3 L22.5,3.3 L22.5,19 L19,22 L1,22 Z" fill="#d9d9d9" stroke="#8a8a8a" stroke-width="1"/><path d="M22.5,18.5 L18.5,22 L18.5,18.5 Z" fill="#9a9a9a"/><path d="M9,6.5 L3.5,6.5 L3.5,16.5 L9,16.5 M3.5,11.5 L7,11.5 M12.5,6.5 L18.5,6.5 L18.5,16.5 L14.5,16.5 L14.5,13 L11.5,13 L11.5,16.5 M15.5,6.5 L15.5,13" fill="none" stroke="#6a6a6a" stroke-width="1.6"/></svg>
<svg class="ico" style="left:327.0px;top:87px;width:24px;height:24px" viewBox="0 0 24 24"><path d="M2.5,1 L22,1 L22,18 L17,23 L2.5,23 Z" fill="#fafafa" stroke="#c8c8c8" stroke-width="0.9"/><path d="M17,23 L17,18 L22,18" fill="#e0e0e0" stroke="#c8c8c8" stroke-width="0.8"/><path d="M5,9 L11,5.5 L18,8 L18,14 L12,18 L5,15 Z" fill="#9d9d9d" stroke="#6c6c6c" stroke-width="0.7"/><path d="M5,9 L12,11.5 L18,8 M12,11.5 L12,18" fill="none" stroke="#6c6c6c" stroke-width="0.7"/><path d="M5,9 L11,5.5 L18,8 L12,11.5 Z" fill="#dedede"/></svg>
<svg class="ico" style="left:360.0px;top:87px;width:24px;height:24px" viewBox="0 0 24 24"><path d="M1.5,1.2 L22.5,4 L22.5,23 L1.5,20 Z" fill="#c6c6c6" stroke="#6a6a6a" stroke-width="0.9"/><path d="M20.5,4 L22.5,4 L22.5,23 L20.5,22.5 Z" fill="#9a9a9a"/><g fill="#f4f4f4" stroke="#777" stroke-width="0.8"><path d="M3.5,4 L10.5,5 L10.5,11 L3.5,10.2 Z"/><path d="M12.3,5.3 L19.5,6.3 L19.5,12 L12.3,11.2 Z"/><path d="M3.5,12.3 L10.5,13.1 L10.5,19 L3.5,18 Z"/><path d="M12.3,13.3 L19.5,14.1 L19.5,20 L12.3,19.2 Z"/></g><path d="M3.5,6 L6,6.3 M12.3,7.5 L15,7.8 M3.5,14.5 L6,14.7 M12.3,15.5 L15,15.8" stroke="#aaa" stroke-width="1.2"/></svg>
<svg class="ico" style="left:393.0px;top:87px;width:24px;height:24px" viewBox="0 0 24 24"><path d="M1.1,16.7 L17.9,3.1 L7.6,12 Z" fill="#c0c0c0" stroke="#6a6a6a" stroke-width="0.8" stroke-linejoin="round"/><path d="M7.6,9.7 L17.9,3.1 L23,9.7 L12.8,19.5 Z" fill="#d8d8d8" stroke="#6a6a6a" stroke-width="0.9" stroke-linejoin="round"/><path d="M1.1,16.7 L7.6,9.7 L8,12.3 Z" fill="#aaa" stroke="#6a6a6a" stroke-width="0.7" stroke-linejoin="round"/></svg>
<svg class="ico" style="left:426.0px;top:87px;width:24px;height:24px" viewBox="0 0 24 24"><circle cx="6.5" cy="5.5" r="4" fill="#dedede" stroke="#6c6c6c" stroke-width="0.9"/><circle cx="17.5" cy="5.5" r="4" fill="#dedede" stroke="#6c6c6c" stroke-width="0.9"/><rect x="5" y="9" width="3" height="14" rx="1.2" fill="#dedede" stroke="#6c6c6c" stroke-width="0.8"/><rect x="16" y="9" width="3" height="14" rx="1.2" fill="#dedede" stroke="#6c6c6c" stroke-width="0.8"/></svg>
<div class="dd" style="left:455.0px;top:97.0px"></div>
<svg class="ico" style="left:471.0px;top:87px;width:24px;height:24px" viewBox="0 0 24 24"><circle cx="11.8" cy="10.3" r="9.6" fill="#dadada" stroke="#7a7a7a" stroke-width="0.9"/><path d="M11.8,0.8 L21.6,10.3 L11.8,19.6 Z" fill="#6a6a6a"/><rect x="10.8" y="0.5" width="2" height="22.8" fill="#6a6a6a"/><path d="M3.8,12.8 L7.4,3.8 L10.8,12.8 M5.2,9.6 L9.6,9.6" fill="none" stroke="#6a6a6a" stroke-width="1"/></svg>
<svg class="ico" style="left:504.0px;top:87px;width:24px;height:24px" viewBox="0 0 24 24"><g fill="#9d9d9d" stroke="#6c6c6c" stroke-width="0.6"><ellipse cx="7" cy="2.5" rx="2" ry="1.2"/><ellipse cx="14" cy="2" rx="2" ry="1.2"/><ellipse cx="20" cy="4" rx="1.5" ry="1.5"/><ellipse cx="2.5" cy="8" rx="1.4" ry="1.8"/><ellipse cx="22" cy="10" rx="1.4" ry="1.8"/><ellipse cx="2.5" cy="16" rx="1.4" ry="1.8"/><ellipse cx="21" cy="17" rx="1.4" ry="1.8"/><ellipse cx="6" cy="21.5" rx="2" ry="1.2"/><ellipse cx="13" cy="22" rx="2" ry="1.2"/><ellipse cx="19" cy="21" rx="1.5" ry="1.2"/></g><circle cx="12" cy="12" r="6.5" fill="#dedede" stroke="#6c6c6c" stroke-width="0.8"/><circle cx="12" cy="12" r="4" fill="#9d9d9d" opacity="0.6"/><ellipse cx="8" cy="15" rx="2" ry="1.2" fill="#9d9d9d" stroke="#6c6c6c" stroke-width="0.6"/><ellipse cx="15" cy="8" rx="2" ry="1.2" fill="#9d9d9d" stroke="#6c6c6c" stroke-width="0.6"/></svg>
<svg class="ico" style="left:537.0px;top:87px;width:24px;height:24px" viewBox="0 0 24 24"><polygon points="10.5,5 20.5,7 20.5,10 10.5,8" fill="#d8d8d8" stroke="#6c6c6c" stroke-width="0.8" stroke-linejoin="round"/><polygon points="10.5,5 13.5,2.5 23,4.5 20.5,7" fill="#e6e6e6" stroke="#6c6c6c" stroke-width="0.8" stroke-linejoin="round"/><polygon points="20.5,7 23,4.5 23,7.5 20.5,10" fill="#bdbdbd" stroke="#6c6c6c" stroke-width="0.8" stroke-linejoin="round"/><polygon points="6,11 15.5,13 15.5,16 6,14" fill="#d8d8d8" stroke="#6c6c6c" stroke-width="0.8" stroke-linejoin="round"/><polygon points="6,11 9,8.5 18,10.5 15.5,13" fill="#e6e6e6" stroke="#6c6c6c" stroke-width="0.8" stroke-linejoin="round"/><polygon points="15.5,13 18,10.5 18,13.5 15.5,16" fill="#bdbdbd" stroke="#6c6c6c" stroke-width="0.8" stroke-linejoin="round"/><polygon points="1,16 11.5,18 11.5,21 1,19" fill="#d8d8d8" stroke="#6c6c6c" stroke-width="0.8" stroke-linejoin="round"/><polygon points="1,16 4,13.5 14,15.5 11.5,18" fill="#e6e6e6" stroke="#6c6c6c" stroke-width="0.8" stroke-linejoin="round"/><polygon points="11.5,18 14,15.5 14,18.5 11.5,21" fill="#bdbdbd" stroke="#6c6c6c" stroke-width="0.8" stroke-linejoin="round"/></svg>
<svg class="ico" style="left:570.0px;top:87px;width:24px;height:24px" viewBox="0 0 24 24"><path d="M1.5,1 L9,3 L9,5 L11,5 L11,3 L22.5,6 L22.5,23 L13,21 L13,19 L11,19 L11,21 L1.5,18 Z" fill="#dedede" stroke="#6c6c6c" stroke-width="0.9"/><path d="M20,5.5 L20,22.5 L22.5,23" fill="#9d9d9d" stroke="#6c6c6c" stroke-width="0.7"/></svg>
<div class="dd" style="left:599.0px;top:97.0px"></div>
<svg class="ico" style="left:615.0px;top:87px;width:24px;height:24px" viewBox="0 0 24 24"><path d="M4,2 L10,1 L10,12 L19,11 L19,23 L16,23 L16,17 L11,18 L11,23 L8,23 L8,18 L4,16 Z" fill="#dedede" stroke="#6c6c6c" stroke-width="0.9" stroke-linejoin="round"/><path d="M6,3 L6,14 L8,16 L16,15 M10,12 L10,17 M4,16 L10,14" fill="none" stroke="#6c6c6c" stroke-width="0.8"/><path d="M6,4 L8,3.5 L8,10 L6,10.5" fill="#fff" stroke="#6c6c6c" stroke-width="0.6"/></svg>
<svg class="ico" style="left:648.0px;top:87px;width:24px;height:24px" viewBox="0 0 24 24"><path d="M1.5,5 L4,1 L7,4 L7,23 L1.5,23 Z M9,8 L12,4 L15,7 L15,23 L9,23 Z M16.5,10 L19.5,7 L22.5,10 L22.5,23 L16.5,23 Z" fill="#dedede" stroke="#6c6c6c" stroke-width="0.9" stroke-linejoin="round"/><path d="M4,1 L4,23 M12,4 L12,23 M19.5,7 L19.5,23" stroke="#6c6c6c" stroke-width="0.7"/></svg>
<svg class="ico" style="left:680.5px;top:87px;width:24px;height:24px" viewBox="0 0 24 24"><path d="M2,8 L4,5 L6,8 L6,23 L2,23 Z M10,6 L12,3 L14,6 L14,23 L10,23 Z M18,8 L20,5 L22,8 L22,23 L18,23 Z" fill="#dedede" stroke="#6c6c6c" stroke-width="0.9"/><rect x="1" y="11" width="22" height="2" fill="#dedede" stroke="#6c6c6c" stroke-width="0.7"/><rect x="1" y="17" width="22" height="2" fill="#dedede" stroke="#6c6c6c" stroke-width="0.7"/></svg>
<svg class="ico" style="left:714.0px;top:87px;width:24px;height:24px" viewBox="0 0 24 24"><path d="M1,8 L23,1 L23,4 L1,11 Z M1,20 L23,20 L23,23 L1,23 Z" fill="#dedede" stroke="#6c6c6c" stroke-width="0.9"/><path d="M4,10 L4,20 M4,11 L11,20 M11,7.5 L11,20 M11,8 L20,20 M20,4.5 L20,20" fill="none" stroke="#6c6c6c" stroke-width="2.2"/><path d="M4,10 L4,20 M4,11 L11,20 M11,7.5 L11,20 M11,8 L20,20 M20,4.5 L20,20" fill="none" stroke="#dedede" stroke-width="0.9"/></svg>
<svg class="ico" style="left:747.0px;top:87px;width:24px;height:24px" viewBox="0 0 24 24"><path d="M3,1.5 L21,1.5 L21,5 L14,5 L14,19 L21,19 L21,22.5 L3,22.5 L3,19 L10,19 L10,5 L3,5 Z" fill="#dedede" stroke="#6c6c6c" stroke-width="0.9"/><path d="M12,5 L12,19" stroke="#9d9d9d" stroke-width="1"/></svg>
<svg class="ico" style="left:780.0px;top:87px;width:24px;height:24px" viewBox="0 0 24 24"><circle cx="15" cy="6" r="5" fill="#dedede" stroke="#6c6c6c" stroke-width="0.9"/><circle cx="6" cy="14" r="5" fill="#dedede" stroke="#6c6c6c" stroke-width="0.9"/><circle cx="15" cy="18" r="5" fill="#dedede" stroke="#6c6c6c" stroke-width="0.9"/></svg>
<div class="dd" style="left:809.0px;top:97.0px"></div>
<svg class="ico" style="left:825.0px;top:87px;width:24px;height:24px" viewBox="0 0 24 24"><rect x="1.5" y="2.5" width="21" height="19" fill="#dedede" stroke="#6c6c6c" stroke-width="1.1"/><path d="M1.5,7 L22.5,7 M1.5,11 L22.5,11 M1.5,15 L22.5,15 M1.5,18.5 L22.5,18.5 M8,2.5 L8,21.5" fill="none" stroke="#6c6c6c" stroke-width="0.9"/></svg>
<svg class="ico" style="left:858.0px;top:87px;width:24px;height:24px" viewBox="0 0 24 24"><path d="M5,4 L19,8 Q23,10 22,16 Q21,21 16,21 L3,17 Q0,15 1,9 Q2,4 5,4 Z" fill="#dedede" stroke="#6c6c6c" stroke-width="0.9"/><ellipse cx="5" cy="10.5" rx="4" ry="6.5" fill="#dedede" stroke="#6c6c6c" stroke-width="0.9"/><ellipse cx="5" cy="10.5" rx="2" ry="3.5" fill="#fff" stroke="#6c6c6c" stroke-width="0.8"/></svg>
<div class="dd" style="left:887.0px;top:97.0px"></div>
<svg class="ico" style="left:903.0px;top:87px;width:24px;height:24px" viewBox="0 0 24 24"><path d="M2,5 L15,5 L19,2 L19,18 L15,22 L2,22 Z" fill="#888" stroke="#555" stroke-width="0.9"/><path d="M2,5 L6,2 L19,2 L15,5 Z" fill="#aaa" stroke="#555" stroke-width="0.7"/><path d="M20,4 L22,4 M20,8 L23,8 M20,12 L22,12 M20,16 L23,16" stroke="#555" stroke-width="1.2" stroke-dasharray="1,1"/><rect x="4" y="8" width="9" height="11" fill="#9a9a9a"/></svg>
<svg class="ico" style="left:936.0px;top:87px;width:24px;height:24px" viewBox="0 0 24 24"><path d="M2,6 L14,6 L18,3 L18,19 L14,22 L2,22 Z" fill="#999" stroke="#666" stroke-width="0.9"/><path d="M2,6 L6,3 L18,3 L14,6 Z" fill="#bbb" stroke="#666" stroke-width="0.7"/><path d="M20,4 L22,4 M20,8 L23,8 M20,12 L22,12 M20,16 L23,16 M20,20 L22,20" stroke="#777" stroke-width="1.2"/><path d="M3,23 L14,23" stroke="#aaa" stroke-width="1" stroke-dasharray="1,1"/></svg>
<svg class="ico" style="left:969.0px;top:87px;width:24px;height:24px" viewBox="0 0 24 24"><path d="M10,1 L14,1 L14,10 L23,10 L23,14 L14,14 L14,23 L10,23 L10,14 L1,14 L1,10 L10,10 Z" fill="#9d9d9d" stroke="#6c6c6c" stroke-width="0.8"/></svg>
<svg class="ico" style="left:1002.0px;top:87px;width:24px;height:24px" viewBox="0 0 24 24"><rect x="1" y="10" width="22" height="4" fill="#9d9d9d" stroke="#6c6c6c" stroke-width="0.8"/></svg>
<svg class="ico" style="left:1035.0px;top:87px;width:24px;height:24px" viewBox="0 0 24 24"><path d="M2,17 Q2,3 12,2 Q20,2 22,12 L22,18 Q23,22 20,22 Q10,22 3,20 Z" fill="#8a8a8a" stroke="#555" stroke-width="0.9"/><path d="M6,17 Q7,6 13,3 M11,18 Q12,8 17,4" fill="none" stroke="#ccc" stroke-width="1"/><path d="M2,17 Q12,20 22,18" fill="none" stroke="#555" stroke-width="1"/></svg>
<div class="handle" style="left:5px;top:129px"></div>
<div class="chk" style="left:14px;top:123px;width:32px;height:31px"></div>
<div class="chk" style="left:47px;top:123px;width:32px;height:31px"></div>
<div class="chk" style="left:80px;top:123px;width:32px;height:31px"></div>
<div class="chk" style="left:179px;top:123px;width:32px;height:31px"></div>
<div class="chk" style="left:443px;top:123px;width:32px;height:31px"></div>
<svg class="ico" style="left:18.0px;top:126px;width:24px;height:24px" viewBox="0 0 24 24"><path d="M7.5,12 L7.5,7 Q7.5,2.5 12,2.5 Q16.5,2.5 16.5,7 L16.5,12" fill="none" stroke="#0b6569" stroke-width="3.6"/><path d="M7.5,12 L7.5,7 Q7.5,2.5 12,2.5 Q16.5,2.5 16.5,7 L16.5,12" fill="none" stroke="#2cc9d0" stroke-width="2"/><rect x="4.3" y="11.2" width="15.4" height="11.3" rx="1.2" fill="#1fbcc4" stroke="#0b6569" stroke-width="0.8"/><path d="M6,14.5 L18,14.5 M6,17.3 L18,17.3 M6,20 L18,20" stroke="#0b8f96" stroke-width="1"/></svg>
<svg class="ico" style="left:51.0px;top:126px;width:24px;height:24px" viewBox="0 0 24 24"><path d="M8,14 L19,3 L21.5,5.5 L10.5,16.5 Z" fill="#1fbcc4" stroke="#0b6569" stroke-width="0.8"/><circle cx="6.5" cy="17.5" r="4.5" fill="#1fbcc4" stroke="#0b6569" stroke-width="0.8"/></svg>
<svg class="ico" style="left:84.0px;top:126px;width:24px;height:24px" viewBox="0 0 24 24"><path d="M2,19.5 L19.5,2 L22,4.5 L4.5,22 Z" fill="#1fbcc4" stroke="#0b6569" stroke-width="0.8"/><circle cx="12" cy="12" r="5" fill="#1fbcc4" stroke="#0b6569" stroke-width="0.8"/></svg>
<svg class="ico" style="left:117.0px;top:126px;width:24px;height:24px" viewBox="0 0 24 24"><circle cx="12" cy="12" r="10.5" fill="#1fbcc4" stroke="#0b6569" stroke-width="0.8"/><circle cx="12" cy="12" r="6.5" fill="#fff"/><circle cx="12" cy="12" r="3.5" fill="#1fbcc4" stroke="#0b6569" stroke-width="0.8"/></svg>
<svg class="ico" style="left:150.0px;top:126px;width:24px;height:24px" viewBox="0 0 24 24"><path d="M12,3.5 L20.5,12 L12,20.5 L3.5,12 Z" fill="none" stroke="#0b6569" stroke-width="2.4"/><path d="M12,3.5 L20.5,12 L12,20.5 L3.5,12 Z" fill="none" stroke="#2cc9d0" stroke-width="1"/><circle cx="12" cy="3.5" r="3" fill="#1fbcc4" stroke="#0b6569" stroke-width="0.8"/><circle cx="20.5" cy="12" r="3" fill="#1fbcc4" stroke="#0b6569" stroke-width="0.8"/><circle cx="12" cy="20.5" r="3" fill="#1fbcc4" stroke="#0b6569" stroke-width="0.8"/><circle cx="3.5" cy="12" r="3" fill="#1fbcc4" stroke="#0b6569" stroke-width="0.8"/></svg>
<svg class="ico" style="left:183.0px;top:126px;width:24px;height:24px" viewBox="0 0 24 24"><path d="M3,5.5 L5.5,3 L12,9.5 L18.5,3 L21,5.5 L14.5,12 L21,18.5 L18.5,21 L12,14.5 L5.5,21 L3,18.5 L9.5,12 Z" fill="#1fbcc4" stroke="#0b6569" stroke-width="0.8"/></svg>
<svg class="ico" style="left:216.0px;top:126px;width:24px;height:24px" viewBox="0 0 24 24"><rect x="1" y="17" width="22" height="5" fill="#1fbcc4" stroke="#0b6569" stroke-width="0.8"/><rect x="10" y="3" width="4" height="14" fill="#1fbcc4" stroke="#0b6569" stroke-width="0.8"/></svg>
<svg class="ico" style="left:249.0px;top:126px;width:24px;height:24px" viewBox="0 0 24 24"><circle cx="4" cy="12" r="3" fill="#1fbcc4" stroke="#0b6569" stroke-width="0.8"/><circle cx="12" cy="12" r="3" fill="#1fbcc4" stroke="#0b6569" stroke-width="0.8"/><circle cx="20" cy="12" r="3" fill="#1fbcc4" stroke="#0b6569" stroke-width="0.8"/></svg>
<svg class="ico" style="left:282.0px;top:126px;width:24px;height:24px" viewBox="0 0 24 24"><path d="M6,3 L7.6,0.6 L23.5,10.4 L21.9,12.8 Z M1.2,10.2 L2.8,7.8 L18.7,17.6 L17.1,20 Z" fill="#1fbcc4" stroke="#0b6569" stroke-width="0.8" stroke-linejoin="round" transform="translate(0,1.5)"/></svg>
<svg class="ico" style="left:315.0px;top:126px;width:24px;height:24px" viewBox="0 0 24 24"><path d="M9,5 L14,1.5 L22.5,1.5 L22.5,13 L17,17 L9,17 Z" fill="#1fbcc4" stroke="#0b6569" stroke-width="0.8"/><path d="M9,5 L17,5 L22.5,1.5 M17,5 L17,17" fill="none" stroke="#0b6569" stroke-width="0.8"/><path d="M9,5 L14,1.5 L22.5,1.5 L17,5 Z" fill="#4fdbe0"/><circle cx="6" cy="17" r="5.5" fill="#1fbcc4" stroke="#0b6569" stroke-width="0.8"/></svg>
<svg class="ico" style="left:347.0px;top:126px;width:24px;height:24px" viewBox="0 0 24 24"><path d="M2.5,10.5 L4,8 L20.5,18 L19,20.5 Z" fill="#1fbcc4" stroke="#0b6569" stroke-width="0.8"/><circle cx="16.6" cy="5.8" r="3.4" fill="#1fbcc4" stroke="#0b6569" stroke-width="0.8"/></svg>
<svg class="ico" style="left:381.0px;top:126px;width:24px;height:24px" viewBox="0 0 24 24"><path d="M10.2,3.5 L13.8,3.5 L13.8,10.2 L20.3,10.2 L20.3,13.8 L13.8,13.8 L13.8,20.5 L10.2,20.5 L10.2,13.8 L3.5,13.8 L3.5,10.2 L10.2,10.2 Z" fill="#1fbcc4" stroke="#0b6569" stroke-width="0.8"/></svg>
<svg class="ico" style="left:414.0px;top:126px;width:24px;height:24px" viewBox="0 0 24 24"><path d="M7,1 L7,23 M17,1 L17,23 M1,7 L23,7 M1,17 L23,17" stroke="#0b6569" stroke-width="3.6"/><path d="M7,1 L7,23 M17,1 L17,23 M1,7 L23,7 M1,17 L23,17" stroke="#2cc9d0" stroke-width="2"/></svg>
<svg class="ico" style="left:447.0px;top:126px;width:24px;height:24px" viewBox="0 0 24 24"><rect x="1" y="1" width="22" height="22" fill="#1fbcc4" stroke="#0b6569" stroke-width="1"/><rect x="2" y="2" width="20" height="10" fill="#3dd0d6" opacity="0.6"/><circle cx="7" cy="16" r="2.8" fill="none" stroke="#0b6569" stroke-width="0.9"/></svg>
<svg class="ico" style="left:479.0px;top:126px;width:24px;height:24px" viewBox="0 0 24 24"><text x="8.6" y="6.8" font-size="8.2" font-weight="bold" font-family="Liberation Sans" fill="#0d5a5e" stroke="#0d5a5e" stroke-width="0.5" letter-spacing="-0.2">1.00</text><text transform="translate(7.8,21) rotate(-90)" font-size="8.2" font-weight="bold" font-family="Liberation Sans" fill="#0d5a5e" stroke="#0d5a5e" stroke-width="0.5" letter-spacing="-0.2">1.00</text><path d="M15,19.8 L10.8,19.8 L10.8,9.4 L21.4,9.4 L21.4,13.5" fill="none" stroke="#0b5a5e" stroke-width="3.2" stroke-linejoin="round"/><path d="M15,19.8 L10.8,19.8 L10.8,9.4 L21.4,9.4 L21.4,13.5" fill="none" stroke="#2ee0e6" stroke-width="1.6" stroke-linejoin="round"/></svg>
<svg class="ico" style="left:513.0px;top:126px;width:24px;height:24px" viewBox="0 0 24 24"><path d="M5.5,2 L5.5,22 M12,2 L12,22 M18.5,2 L18.5,22 M2,5.5 L22,5.5 M2,12 L22,12 M2,18.5 L22,18.5" fill="none" stroke="#4a4a4a" stroke-width="3.4" stroke-linecap="round"/><path d="M5.5,2 L5.5,22 M12,2 L12,22 M18.5,2 L18.5,22 M2,5.5 L22,5.5 M2,12 L22,12 M2,18.5 L22,18.5" fill="none" stroke="#f2f2f2" stroke-width="1.4" stroke-linecap="round"/></svg>
<div class="handle" style="left:551px;top:129px"></div>
<svg class="ico" style="left:562.0px;top:126px;width:24px;height:24px" viewBox="0 0 24 24"><path d="M4,20 L20,4" stroke="#7a7a7a" stroke-width="2.6"/><path d="M4,20 L20,4" stroke="#f2f2f2" stroke-width="1"/><circle cx="4" cy="20" r="3.2" fill="#c6c6c6" stroke="#7a7a7a" stroke-width="0.9"/><circle cx="20" cy="4" r="3.2" fill="#c6c6c6" stroke="#7a7a7a" stroke-width="0.9"/></svg>
<svg class="ico" style="left:594.5px;top:126px;width:24px;height:24px" viewBox="0 0 24 24"><path d="M4,20 L8,9 L13,20 L20,4" fill="none" stroke="#7a7a7a" stroke-width="2.4"/><path d="M4,20 L8,9 L13,20 L20,4" fill="none" stroke="#f2f2f2" stroke-width="0.9"/><circle cx="4" cy="20" r="3.2" fill="#c6c6c6" stroke="#7a7a7a" stroke-width="0.9"/><circle cx="8.5" cy="9" r="3.2" fill="#c6c6c6" stroke="#7a7a7a" stroke-width="0.9"/><circle cx="13" cy="20" r="3.2" fill="#c6c6c6" stroke="#7a7a7a" stroke-width="0.9"/><circle cx="20" cy="4" r="3.2" fill="#c6c6c6" stroke="#7a7a7a" stroke-width="0.9"/></svg>
<svg class="ico" style="left:627.0px;top:126px;width:24px;height:24px" viewBox="0 0 24 24"><path d="M4,1 L4,9 Q5,14 12,18 L23,18" fill="none" stroke="#7a7a7a" stroke-width="2.2"/><path d="M4,1 L4,9 Q5,14 12,18 L23,18" fill="none" stroke="#f2f2f2" stroke-width="0.9"/><path d="M4,17 L4,23 M1,20 L7,20" stroke="#888" stroke-width="1" stroke-dasharray="1.2,1"/><circle cx="4" cy="8" r="3.2" fill="#c6c6c6" stroke="#7a7a7a" stroke-width="0.9"/><circle cx="14" cy="18" r="3.2" fill="#c6c6c6" stroke="#7a7a7a" stroke-width="0.9"/></svg>
<svg class="ico" style="left:661.0px;top:126px;width:24px;height:24px" viewBox="0 0 24 24"><path d="M4,4 Q18,5 19,19" fill="none" stroke="#7a7a7a" stroke-width="2.4"/><path d="M4,4 Q18,5 19,19" fill="none" stroke="#f2f2f2" stroke-width="0.9"/><circle cx="4" cy="4" r="3.2" fill="#c6c6c6" stroke="#7a7a7a" stroke-width="0.9"/><circle cx="4" cy="19" r="3.2" fill="#c6c6c6" stroke="#7a7a7a" stroke-width="0.9"/><circle cx="19" cy="19" r="3.2" fill="#c6c6c6" stroke="#7a7a7a" stroke-width="0.9"/></svg>
<div class="dd" style="left:690.0px;top:136.0px"></div>
<svg class="ico" style="left:705.0px;top:126px;width:24px;height:24px" viewBox="0 0 24 24"><circle cx="12" cy="12" r="10" fill="none" stroke="#7a7a7a" stroke-width="2.4"/><circle cx="12" cy="12" r="10" fill="none" stroke="#f2f2f2" stroke-width="0.9"/><circle cx="12" cy="12" r="3.4" fill="#c6c6c6" stroke="#7a7a7a" stroke-width="0.9"/><circle cx="20" cy="11" r="3.4" fill="#c6c6c6" stroke="#7a7a7a" stroke-width="0.9"/></svg>
<svg class="ico" style="left:738.5px;top:126px;width:24px;height:24px" viewBox="0 0 24 24"><ellipse cx="11" cy="12" rx="10" ry="4" fill="none" stroke="#7a7a7a" stroke-width="2.2"/><ellipse cx="11" cy="12" rx="10" ry="4" fill="none" stroke="#f2f2f2" stroke-width="0.8"/><ellipse cx="11" cy="12" rx="6" ry="1.8" fill="none" stroke="#7a7a7a" stroke-width="1"/><circle cx="19" cy="4" r="3.2" fill="#c6c6c6" stroke="#7a7a7a" stroke-width="0.9"/><circle cx="4" cy="20" r="3.2" fill="#c6c6c6" stroke="#7a7a7a" stroke-width="0.9"/></svg>
<svg class="ico" style="left:772.0px;top:126px;width:24px;height:24px" viewBox="0 0 24 24"><rect x="3.5" y="3.5" width="16" height="16" fill="none" stroke="#7a7a7a" stroke-width="2.4"/><rect x="3.5" y="3.5" width="16" height="16" fill="none" stroke="#f2f2f2" stroke-width="0.9"/><circle cx="3.5" cy="19.5" r="3.2" fill="#c6c6c6" stroke="#7a7a7a" stroke-width="0.9"/><circle cx="19.5" cy="3.5" r="3.2" fill="#c6c6c6" stroke="#7a7a7a" stroke-width="0.9"/></svg>
<svg class="ico" style="left:805.0px;top:126px;width:24px;height:24px" viewBox="0 0 24 24"><path d="M12,1.5 L22,8.5 L18.5,21 L5.5,21 L2,8.5 Z" fill="none" stroke="#7a7a7a" stroke-width="2.2"/><path d="M12,1.5 L22,8.5 L18.5,21 L5.5,21 L2,8.5 Z" fill="none" stroke="#f2f2f2" stroke-width="0.8"/><circle cx="12" cy="12" r="3" fill="#c6c6c6" stroke="#7a7a7a" stroke-width="0.9"/><circle cx="21" cy="9" r="3.2" fill="#c6c6c6" stroke="#7a7a7a" stroke-width="0.9"/></svg>
<svg class="ico" style="left:838.0px;top:126px;width:24px;height:24px" viewBox="0 0 24 24"><path d="M4,19 Q4,4 12,4 Q20,4 20,19" fill="none" stroke="#7a7a7a" stroke-width="2.4"/><path d="M4,19 Q4,4 12,4 Q20,4 20,19" fill="none" stroke="#f2f2f2" stroke-width="0.9"/><circle cx="12" cy="4.5" r="3.2" fill="#c6c6c6" stroke="#7a7a7a" stroke-width="0.9"/><circle cx="4" cy="19" r="3.2" fill="#c6c6c6" stroke="#7a7a7a" stroke-width="0.9"/><circle cx="20" cy="19" r="3.2" fill="#c6c6c6" stroke="#7a7a7a" stroke-width="0.9"/></svg>
<svg class="ico" style="left:870.5px;top:126px;width:24px;height:24px" viewBox="0 0 24 24"><path d="M4,4 L4,19 M20,4 L20,19" stroke="#7a7a7a" stroke-width="1"/><path d="M4,19 Q4,9 12,9 Q20,9 20,19" fill="none" stroke="#7a7a7a" stroke-width="2.2"/><path d="M4,19 Q4,9 12,9 Q20,9 20,19" fill="none" stroke="#f2f2f2" stroke-width="0.8"/><rect x="2" y="1.5" width="4" height="4" fill="#eee" stroke="#7a7a7a" stroke-width="0.8"/><rect x="18" y="1.5" width="4" height="4" fill="#eee" stroke="#7a7a7a" stroke-width="0.8"/><text x="9.5" y="18" font-size="8" font-weight="bold" font-family="Liberation Sans" fill="#777">3</text><circle cx="4" cy="20" r="3" fill="#c6c6c6" stroke="#7a7a7a" stroke-width="0.9"/><circle cx="20" cy="20" r="3" fill="#c6c6c6" stroke="#7a7a7a" stroke-width="0.9"/></svg>
<div class="dd" style="left:900.0px;top:136.0px"></div>
<svg class="ico" style="left:916.0px;top:126px;width:24px;height:24px" viewBox="0 0 24 24"><circle cx="12" cy="12" r="3.6" fill="#c6c6c6" stroke="#7a7a7a" stroke-width="0.9"/></svg>
<svg class="ico" style="left:949.0px;top:126px;width:24px;height:24px" viewBox="0 0 24 24"><path d="M1.5,8 L22.5,1.5 L22.5,6 L8,10 L8,12.5 L22.5,8.5 L22.5,13 L8,17 L8,19 L22.5,15 L22.5,17 L8,23 L1.5,23 Z" fill="#c6c6c6" stroke="#7a7a7a" stroke-width="0.9" stroke-linejoin="round"/><path d="M8,10 L8,23 M1.5,8 L8,10" fill="none" stroke="#7a7a7a" stroke-width="0.8"/></svg>
<svg class="ico" style="left:982.0px;top:126px;width:24px;height:24px" viewBox="0 0 24 24"><text transform="translate(0.5,22.5) scale(1.35,1)" font-size="30.5" font-style="italic" font-family="Liberation Serif" fill="#dadada" stroke="#6e6e6e" stroke-width="0.8">S</text></svg>
<svg class="ico" style="left:1015.0px;top:126px;width:24px;height:24px" viewBox="0 0 24 24"><defs><clipPath id="hcl"><path d="M4,13.8 L14.2,13.8 L14.2,3.8 L20.2,3.8 L20.2,20.2 L4,20.2 Z"/></clipPath></defs><path d="M1.4,11.3 L11.7,11.3 L11.7,1.2 L22.7,1.2 L22.7,22.7 L1.4,22.7 Z" fill="#d8d8d8" stroke="#a8a8a8" stroke-width="1" stroke-linejoin="round"/><path d="M4,13.8 L14.2,13.8 L14.2,3.8 L20.2,3.8 L20.2,20.2 L4,20.2 Z" fill="#fff" stroke="#bbb" stroke-width="0.6"/><g clip-path="url(#hcl)" stroke="#444" stroke-width="1.9"><path d="M0,11 L12,23 M4,9 L18,23 M9,8 L24,23 M13,6 L24,17 M13,0 L24,11 M18,0 L24,6"/></g></svg>
<div class="handle" style="left:1052px;top:129px"></div>
<svg class="ico" style="left:1063.0px;top:126px;width:24px;height:24px" viewBox="0 0 24 24"><path d="M1.5,22 L12,1.5 L18,1.5 L20,20 L22.5,22 L14,22 L15.5,20 L15,16 L8,16 L6,20 L8,22 Z M9.5,13 L15,13 L14.5,5.5 Z" fill="#d4d4d4" stroke="#6e6e6e" stroke-width="0.9" stroke-linejoin="round"/></svg>
<svg class="ico" style="left:1097.0px;top:126px;width:24px;height:24px" viewBox="0 0 24 24"><text x="3" y="8" font-size="9" font-weight="bold" font-family="Liberation Sans" fill="#888" stroke="#666" stroke-width="0.3">1.00</text><path d="M3,12 L21,12 M3,12 L3,22 M21,12 L21,22" fill="none" stroke="#7a7a7a" stroke-width="2"/><path d="M3,12 L21,12" stroke="#eee" stroke-width="0.8"/><circle cx="12" cy="12" r="2.5" fill="#c6c6c6" stroke="#7a7a7a" stroke-width="0.9"/><circle cx="3" cy="21" r="2.5" fill="#c6c6c6" stroke="#7a7a7a" stroke-width="0.9"/><circle cx="21" cy="21" r="2.5" fill="#c6c6c6" stroke="#7a7a7a" stroke-width="0.9"/></svg>
<svg class="ico" style="left:1130.0px;top:126px;width:24px;height:24px" viewBox="0 0 24 24"><path d="M1.5,3.5 L15,3.5 L21,9 L21,13 L15,13 L1.5,13 Z" fill="#eaeaea" stroke="#6e6e6e" stroke-width="1.4"/><path d="M4,7 L11,7 M4,10 L13,10" stroke="#6e6e6e" stroke-width="1.3"/><path d="M16,13 Q21,14 21,19" fill="none" stroke="#6e6e6e" stroke-width="1.4"/><circle cx="20.5" cy="20" r="2.7" fill="#c6c6c6" stroke="#6e6e6e" stroke-width="1.4"/></svg>
<svg class="ico" style="left:1163.0px;top:126px;width:24px;height:24px" viewBox="0 0 24 24"><path d="M1.5,22 L11,2 L17,2 L19,20 L21.5,22 L13,22 L14.5,20 L14,16 L8,16 L6,20 L8,22 Z M9.5,13 L14,13 L13.5,5.5 Z" fill="#d4d4d4" stroke="#6e6e6e" stroke-width="0.9" stroke-linejoin="round"/><path d="M7,3 L9,3 M5.5,6 L8,6 M4,9 L7,9" stroke="#999" stroke-width="0.7"/><path d="M9,17 L18,4 L22,7 L13,19 L9,20 Z" fill="#b8b8b8" stroke="#555" stroke-width="0.8" stroke-linejoin="round"/><path d="M11,15 L19.5,5 M12.5,16.5 L20.5,6" stroke="#777" stroke-width="0.6"/></svg>
<div class="handle" style="left:1199px;top:129px"></div>
<svg class="ico" style="left:1215.0px;top:129px;width:18px;height:18px" viewBox="0 0 24 24"><path d="M7,1 L15,16 M17,1 L9,16" stroke="#6e6e6e" stroke-width="1.5"/><circle cx="6" cy="19" r="3.5" fill="none" stroke="#6e6e6e" stroke-width="1.5"/><circle cx="18" cy="19" r="3.5" fill="none" stroke="#6e6e6e" stroke-width="1.5"/></svg>
<svg class="ico" style="left:1246.7px;top:129px;width:18px;height:18px" viewBox="0 0 24 24"><path d="M2,2 L9,2 L9,20 L2,20 Z" fill="#f8f8f8" stroke="#777" stroke-width="1.5"/><path d="M7,6 L16,6 L22,12 L22,23 L7,23 Z" fill="#f8f8f8" stroke="#777" stroke-width="1.5"/><path d="M15,6 L15,13 L22,13 Z" fill="#777"/></svg>
<svg class="ico" style="left:1284.0px;top:126px;width:24px;height:24px" viewBox="0 0 24 24"><path d="M8.5,9.5 L11,12 L8.5,14.5 M12.5,9.5 L15,12 L12.5,14.5" fill="none" stroke="#3a3f44" stroke-width="1.1"/></svg>
<div class="handle" style="left:1309px;top:129px"></div>
<svg class="ico" style="left:1322.0px;top:126px;width:24px;height:24px" viewBox="0 0 24 24"><circle cx="12" cy="11.8" r="9" fill="#da4453"/></svg>
<svg class="ico" style="left:1346.0px;top:126px;width:24px;height:24px" viewBox="0 0 24 24"><path d="M8.5,9.5 L11,12 L8.5,14.5 M12.5,9.5 L15,12 L12.5,14.5" fill="none" stroke="#3a3f44" stroke-width="1.1"/></svg></div>
<div class="handle" style="left:5px;top:12px"></div>
<!-- splitter dots -->

<!-- left panel -->
<div class="a" style="left:0;top:157px;width:495px;height:500px;background:#eff0f1"></div>
<div class="t" style="left:5px;top:161px;font-size:13px;color:#6a6e72">Combo View</div>
<svg class="a" style="left:476px;top:162px" width="11" height="11" viewBox="0 0 11 11"><rect x="0.6" y="0.6" width="9.8" height="9.8" rx="2" fill="none" stroke="#5f6062" stroke-width="1.1"/><rect x="4.3" y="2.8" width="3.9" height="3.9" rx="0.8" fill="none" stroke="#5f6062" stroke-width="1"/><rect x="2.6" y="4.4" width="3.9" height="3.9" rx="0.8" fill="#f4f5f6" stroke="#5f6062" stroke-width="1"/></svg>
<!-- tabs -->
<div class="a" style="left:1px;top:179px;width:61px;height:25px;background:linear-gradient(#e9eaeb,#e0e1e2);border:1px solid #b5b7b8;border-bottom:none;border-radius:3px 3px 0 0"></div>
<div class="t" style="left:14px;top:187px;font-size:12.5px;color:#6e7276">Model</div>
<div class="a" style="left:1px;top:203px;width:488px;height:454px;border:1px solid #a5a7a8;border-right-color:#a5a7a8;background:#fbfbfb"></div>
<div class="a" style="left:61px;top:177px;width:77px;height:28px;background:#fdfdfd;border:1px solid #a5a7a8;border-bottom:none;border-radius:4px 4px 0 0"></div>
<div class="t" style="left:93px;top:186px;font-size:12.5px;color:#45494d">Tasks</div>
<svg class="a" style="left:73px;top:182px" width="16" height="16" viewBox="0 0 16 16"><path d="M1,3.5 L3.5,1 L13,10.5 L15,15 L10.5,13 Z" fill="#2f5f9e" stroke="#1c3d6b" stroke-width="0.8"/><path d="M2.3,2.3 L11.8,11.8" stroke="#6f9bd6" stroke-width="0.9"/><path d="M10.5,13 L13,10.5 L15,15 Z" fill="#f0f0f0" stroke="#333" stroke-width="0.6"/><path d="M13.6,13.6 L15,15 L14,14.2" fill="#111" stroke="#111" stroke-width="0.8"/></svg>
<!-- task box -->
<div class="a" style="left:3px;top:205px;width:484px;height:452px;border:1px solid #9a9c9d;background:linear-gradient(#ffffff 0px,#e6e6e6 40px,#c4c4c4 80px,#9c9c9c 130px,#818281 170px,#777a78 195px,#777a78)"></div>
<div class="btn" style="left:205px;top:223px;width:80px;height:24px"></div>
<svg class="a" style="left:219px;top:228px" width="14" height="14" viewBox="0 0 14 14"><circle cx="7" cy="7" r="6" fill="#da4453"/><path d="M4.5,4.5 L9.5,9.5 M9.5,4.5 L4.5,9.5" stroke="#fff" stroke-width="1.1"/></svg>
<div class="t" style="left:236px;top:230px;font-size:12.5px;color:#5a5e62">Close</div>
<!-- trimex -->
<div class="a" style="left:12px;top:264px;width:466px;height:209px;background:#eff0f1;border-top:1px solid #fff;border-radius:3px 3px 0 0"></div>
<div class="a" style="left:12px;top:264px;width:466px;height:24px;background:linear-gradient(90deg,#3fa8e8,#7ccaf3 50%,#9ad8fa);border-radius:3px 3px 0 0;border-top:1px solid #fff"></div>
<div class="t" style="left:36px;top:271px;font-size:13.8px;font-weight:bold;color:#fff">Trimex</div>
<svg class="a" style="left:18px;top:269px" width="16" height="16" viewBox="0 0 16 16"><rect x="7" y="1" width="2" height="14" fill="#1e2a44"/><path d="M1,8 L4,5 L4,7 L6,7 L6,9 L4,9 L4,11 Z M15,8 L12,5 L12,7 L10,7 L10,9 L12,9 L12,11 Z" fill="#4a6aa0" stroke="#1e2a44" stroke-width="0.6"/></svg>
<svg class="a" style="left:459px;top:269px" width="16" height="16" viewBox="0 0 16 16"><circle cx="8" cy="8" r="7.3" fill="#eef4f8"/><path d="M4.5,8 L8,4.5 L11.5,8 M4.5,11.5 L8,8 L11.5,11.5" fill="none" stroke="#2b9be0" stroke-width="1.4"/></svg>
<div class="t" style="left:27px;top:309px;font-size:13.5px;color:#686c70">Distance</div>
<div class="a" style="left:85px;top:302px;width:379px;height:27px;border:1px solid #3daee9;border-radius:3px;background:#fcfcfc"></div>
<div class="a" style="left:88px;top:308px;width:70px;height:15px;background:#3daee9"></div>
<div class="t" style="left:88px;top:309px;font-size:13.6px;color:#fff">3310.0 mm</div>
<svg class="a" style="left:442px;top:305px" width="21" height="21" viewBox="0 0 21 21"><defs><radialGradient id="gk" cx="40%" cy="30%" r="70%"><stop offset="0" stop-color="#9be35a"/><stop offset="1" stop-color="#3f8a0a"/></radialGradient></defs><circle cx="10.5" cy="10.5" r="9.3" fill="url(#gk)" stroke="#3b7a12" stroke-width="0.8"/><path d="M5,10.5 L8.5,14 L16,6.5 L17,9 L8.5,17 L4,12.5 Z" fill="#e8e8e8" stroke="#888" stroke-width="0.4"/></svg>

<!-- 3D view -->
<div class="a" style="left:495px;top:158px;width:872px;height:499px;background:#e9e5e5;overflow:hidden" id="v3d">
</div>
<svg class="a" style="left:0;top:0" width="1367" height="657" viewBox="0 0 1367 657" shape-rendering="crispEdges">
<defs><clipPath id="cv"><rect x="495" y="158" width="872" height="499"/></clipPath></defs>
<g clip-path="url(#cv)">
<!-- grid faint -->
<rect x="724" y="157" width="1" height="500" fill="#dfdbdb"/>
<rect x="1235" y="157" width="1" height="500" fill="#dcd8d8"/>
<!-- wall fills -->
<rect x="495" y="299" width="62" height="5" fill="#dedede"/>
<rect x="553" y="299" width="4" height="215" fill="#dedede"/>
<rect x="557" y="386" width="98" height="5" fill="#dedede"/>
<rect x="649" y="386" width="6" height="128" fill="#dedede"/>
<rect x="495" y="514" width="313" height="11" fill="#dedede"/>
<rect x="808" y="467" width="12" height="58" fill="#dedede"/>
<rect x="808" y="467" width="111" height="12" fill="#dedede"/>
<rect x="907" y="467" width="12" height="58" fill="#dedede"/>
<rect x="907" y="514" width="418" height="11" fill="#dedede"/>
<rect x="1314" y="157" width="11" height="368" fill="#dedede"/>
<!-- wall lines -->
<rect x="495" y="298" width="63" height="1" fill="#1a1a1a"/><rect x="495" y="299" width="62" height="1" fill="#6a6a6a"/>
<rect x="495" y="304" width="57" height="1" fill="#1a1a1a"/><rect x="495" y="303" width="57" height="1" fill="#8a8a8a"/>
<rect x="557" y="299" width="1" height="215" fill="#5a5a5a"/>
<rect x="557" y="385" width="98" height="1" fill="#222"/>
<rect x="557" y="391" width="93" height="1" fill="#222"/>
<rect x="649" y="391" width="1" height="123" fill="#222"/>
<rect x="655" y="298" width="1" height="216" fill="#222"/>
<rect x="655" y="298" width="153" height="1" fill="#333"/>
<rect x="808" y="298" width="1" height="169" fill="#2497a8"/><rect x="809" y="298" width="1" height="169" fill="#8fcdd5"/>
<rect x="806" y="296" width="5" height="5" fill="#5ad87c"/>
<rect x="655" y="511" width="153" height="3" fill="#0000b0"/>
<rect x="495" y="514" width="160" height="1" fill="#8a8a8a"/>
<rect x="495" y="525" width="325" height="1" fill="#6a6a6a"/>
<rect x="808" y="467" width="1" height="47" fill="#222"/>
<rect x="808" y="467" width="111" height="1" fill="#6a6a6a"/>
<rect x="919" y="467" width="1" height="47" fill="#222"/>
<rect x="820" y="479" width="87" height="1" fill="#777"/>
<rect x="820" y="479" width="1" height="46" fill="#333"/>
<rect x="907" y="479" width="1" height="46" fill="#333"/>
<rect x="919" y="514" width="395" height="1" fill="#777"/>
<rect x="907" y="525" width="419" height="1" fill="#6a6a6a"/>
<rect x="1314" y="157" width="1" height="357" fill="#777"/>
<rect x="1325" y="157" width="1" height="369" fill="#111"/>
<rect x="818" y="523" width="4" height="4" fill="#111"/>
<rect x="905" y="523" width="4" height="4" fill="#111"/>
<rect x="1323" y="523" width="4" height="4" fill="#111"/>
</g>
<g shape-rendering="geometricPrecision">
<circle cx="808.5" cy="467.5" r="6.5" fill="#e8e8e8" stroke="#e00000" stroke-width="2"/>
</g>
</svg>
<svg class="a" style="left:0;top:0" width="1367" height="657" viewBox="0 0 1367 657">
<g stroke="#1a1a1a" stroke-width="1" stroke-linejoin="round">
<!-- top/bottom/left/right triangles -->
<polygon points="1295,164 1283.5,177.5 1306.5,177.5" fill="#8d8f91"/>
<polygon points="1295,295 1283.5,282 1306.5,282" fill="#8d8f91"/>
<polygon points="1229,230 1242.5,218.5 1242.5,241.5" fill="#8d8f91"/>
<polygon points="1361,230 1347.5,218.5 1347.5,241.5" fill="#8d8f91"/>
<circle cx="1352.3" cy="172.4" r="6.6" fill="#8d8f91" stroke-width="1.2"/>
<!-- curved arrows -->
<path d="M1276.5,171 L1278.5,177.5 Q1265,182 1258.5,191 L1259.5,194.5 L1245.5,198.5 L1247.5,183.5 L1251.5,185 Q1260,175 1276.5,171 Z" fill="#8d8f91"/>
<path d="M1313.5,171 L1311.5,177.5 Q1325,182 1331.5,191 L1330.5,194.5 L1344.5,198.5 L1342.5,183.5 L1338.5,185 Q1330,175 1313.5,171 Z" fill="#8d8f91"/>
<!-- cube outer -->
<polygon points="1270.5,198.5 1319.5,198.5 1326.5,205.5 1326.5,254.5 1319.5,261.5 1270.5,261.5 1263.5,254.5 1263.5,205.5" fill="#8a8c8e"/>
<polygon points="1278.5,206.5 1311.5,206.5 1318.5,213.5 1318.5,246.5 1311.5,253.5 1278.5,253.5 1271.5,246.5 1271.5,213.5" fill="#8f9193" stroke="#2a2a2a"/>
<line x1="1278.5" y1="198.5" x2="1278.5" y2="206.5"/><line x1="1311.5" y1="198.5" x2="1311.5" y2="206.5"/>
<line x1="1278.5" y1="253.5" x2="1278.5" y2="261.5"/><line x1="1311.5" y1="253.5" x2="1311.5" y2="261.5"/>
<line x1="1263.5" y1="213.5" x2="1271.5" y2="213.5"/><line x1="1263.5" y1="246.5" x2="1271.5" y2="246.5"/>
<line x1="1318.5" y1="213.5" x2="1326.5" y2="213.5"/><line x1="1318.5" y1="246.5" x2="1326.5" y2="246.5"/>
</g>
<g stroke="#f4f4f4" stroke-width="1" fill="none">
<line x1="1280" y1="205.5" x2="1310" y2="205.5"/>
<line x1="1280" y1="254.5" x2="1310" y2="254.5"/>
<line x1="1270.5" y1="215" x2="1270.5" y2="245"/>
<line x1="1319.5" y1="215" x2="1319.5" y2="245"/>
</g>
<text x="1295" y="234.5" text-anchor="middle" font-family="Liberation Sans" font-size="13" fill="#f4f4f4" stroke="#444" stroke-width="0.9" paint-order="stroke" letter-spacing="0.2">TOP</text>
<rect x="1259" y="213" width="2.5" height="52" fill="#00cc00"/>
<rect x="1261" y="263" width="51" height="2.5" fill="#ee0000"/>
<rect x="1259" y="263" width="2.5" height="2.5" fill="#2222cc"/>
<!-- wall overlay over cube -->
<rect x="1315" y="158" width="10" height="140" fill="#dfdfdf" opacity="0.78"/>
<!-- small cube icon -->
<g stroke="#222" stroke-width="1" stroke-linejoin="round">
<polygon points="1330.5,272.5 1339.5,268.5 1349.5,271.5 1349.5,283.5 1340.5,287.5 1330.5,284.5" fill="#8d8f91"/>
<polyline points="1330.5,272.5 1340.5,275.5 1349.5,271.5" fill="none" stroke="#eee"/>
<line x1="1340.5" y1="275.5" x2="1340.5" y2="287" stroke="#eee"/>
</g>
</svg>
<svg class="a" style="left:1327px;top:605px" width="40" height="40" viewBox="0 0 40 40">
<rect x="14" y="19" width="2" height="8" fill="#1e7a1e"/><path d="M13,19 L15,14 L17,19 Z" fill="#1e7a1e"/>
<rect x="18" y="29" width="9" height="2" fill="#6a1a1a"/><path d="M26,28 L32,30 L26,32 Z" fill="#7a1a1a"/>
<circle cx="15" cy="30" r="2" fill="#1a1a9a"/>
<path d="M16.5,5.5 L18.5,8.5 L20.5,5.5 M18.5,8.5 L18.5,11.5" fill="none" stroke="#111" stroke-width="1.2"/>
<path d="M17,22.5 L20.5,22.5 L17,28.5 L20.5,28.5" fill="none" stroke="#111" stroke-width="1.2"/>
<path d="M33.5,22.5 L37.5,28.5 M37.5,22.5 L33.5,28.5" fill="none" stroke="#111" stroke-width="1.3"/>
</svg>
<div class="a" style="left:492px;top:418px;width:1px;height:1px;background:#9c9ea0"></div><div class="a" style="left:492px;top:421px;width:1px;height:1px;background:#9c9ea0"></div><div class="a" style="left:492px;top:424px;width:1px;height:1px;background:#9c9ea0"></div><div class="a" style="left:492px;top:427px;width:1px;height:1px;background:#9c9ea0"></div><div class="a" style="left:492px;top:430px;width:1px;height:1px;background:#9c9ea0"></div><div class="a" style="left:492px;top:433px;width:1px;height:1px;background:#9c9ea0"></div>
</body></html>
